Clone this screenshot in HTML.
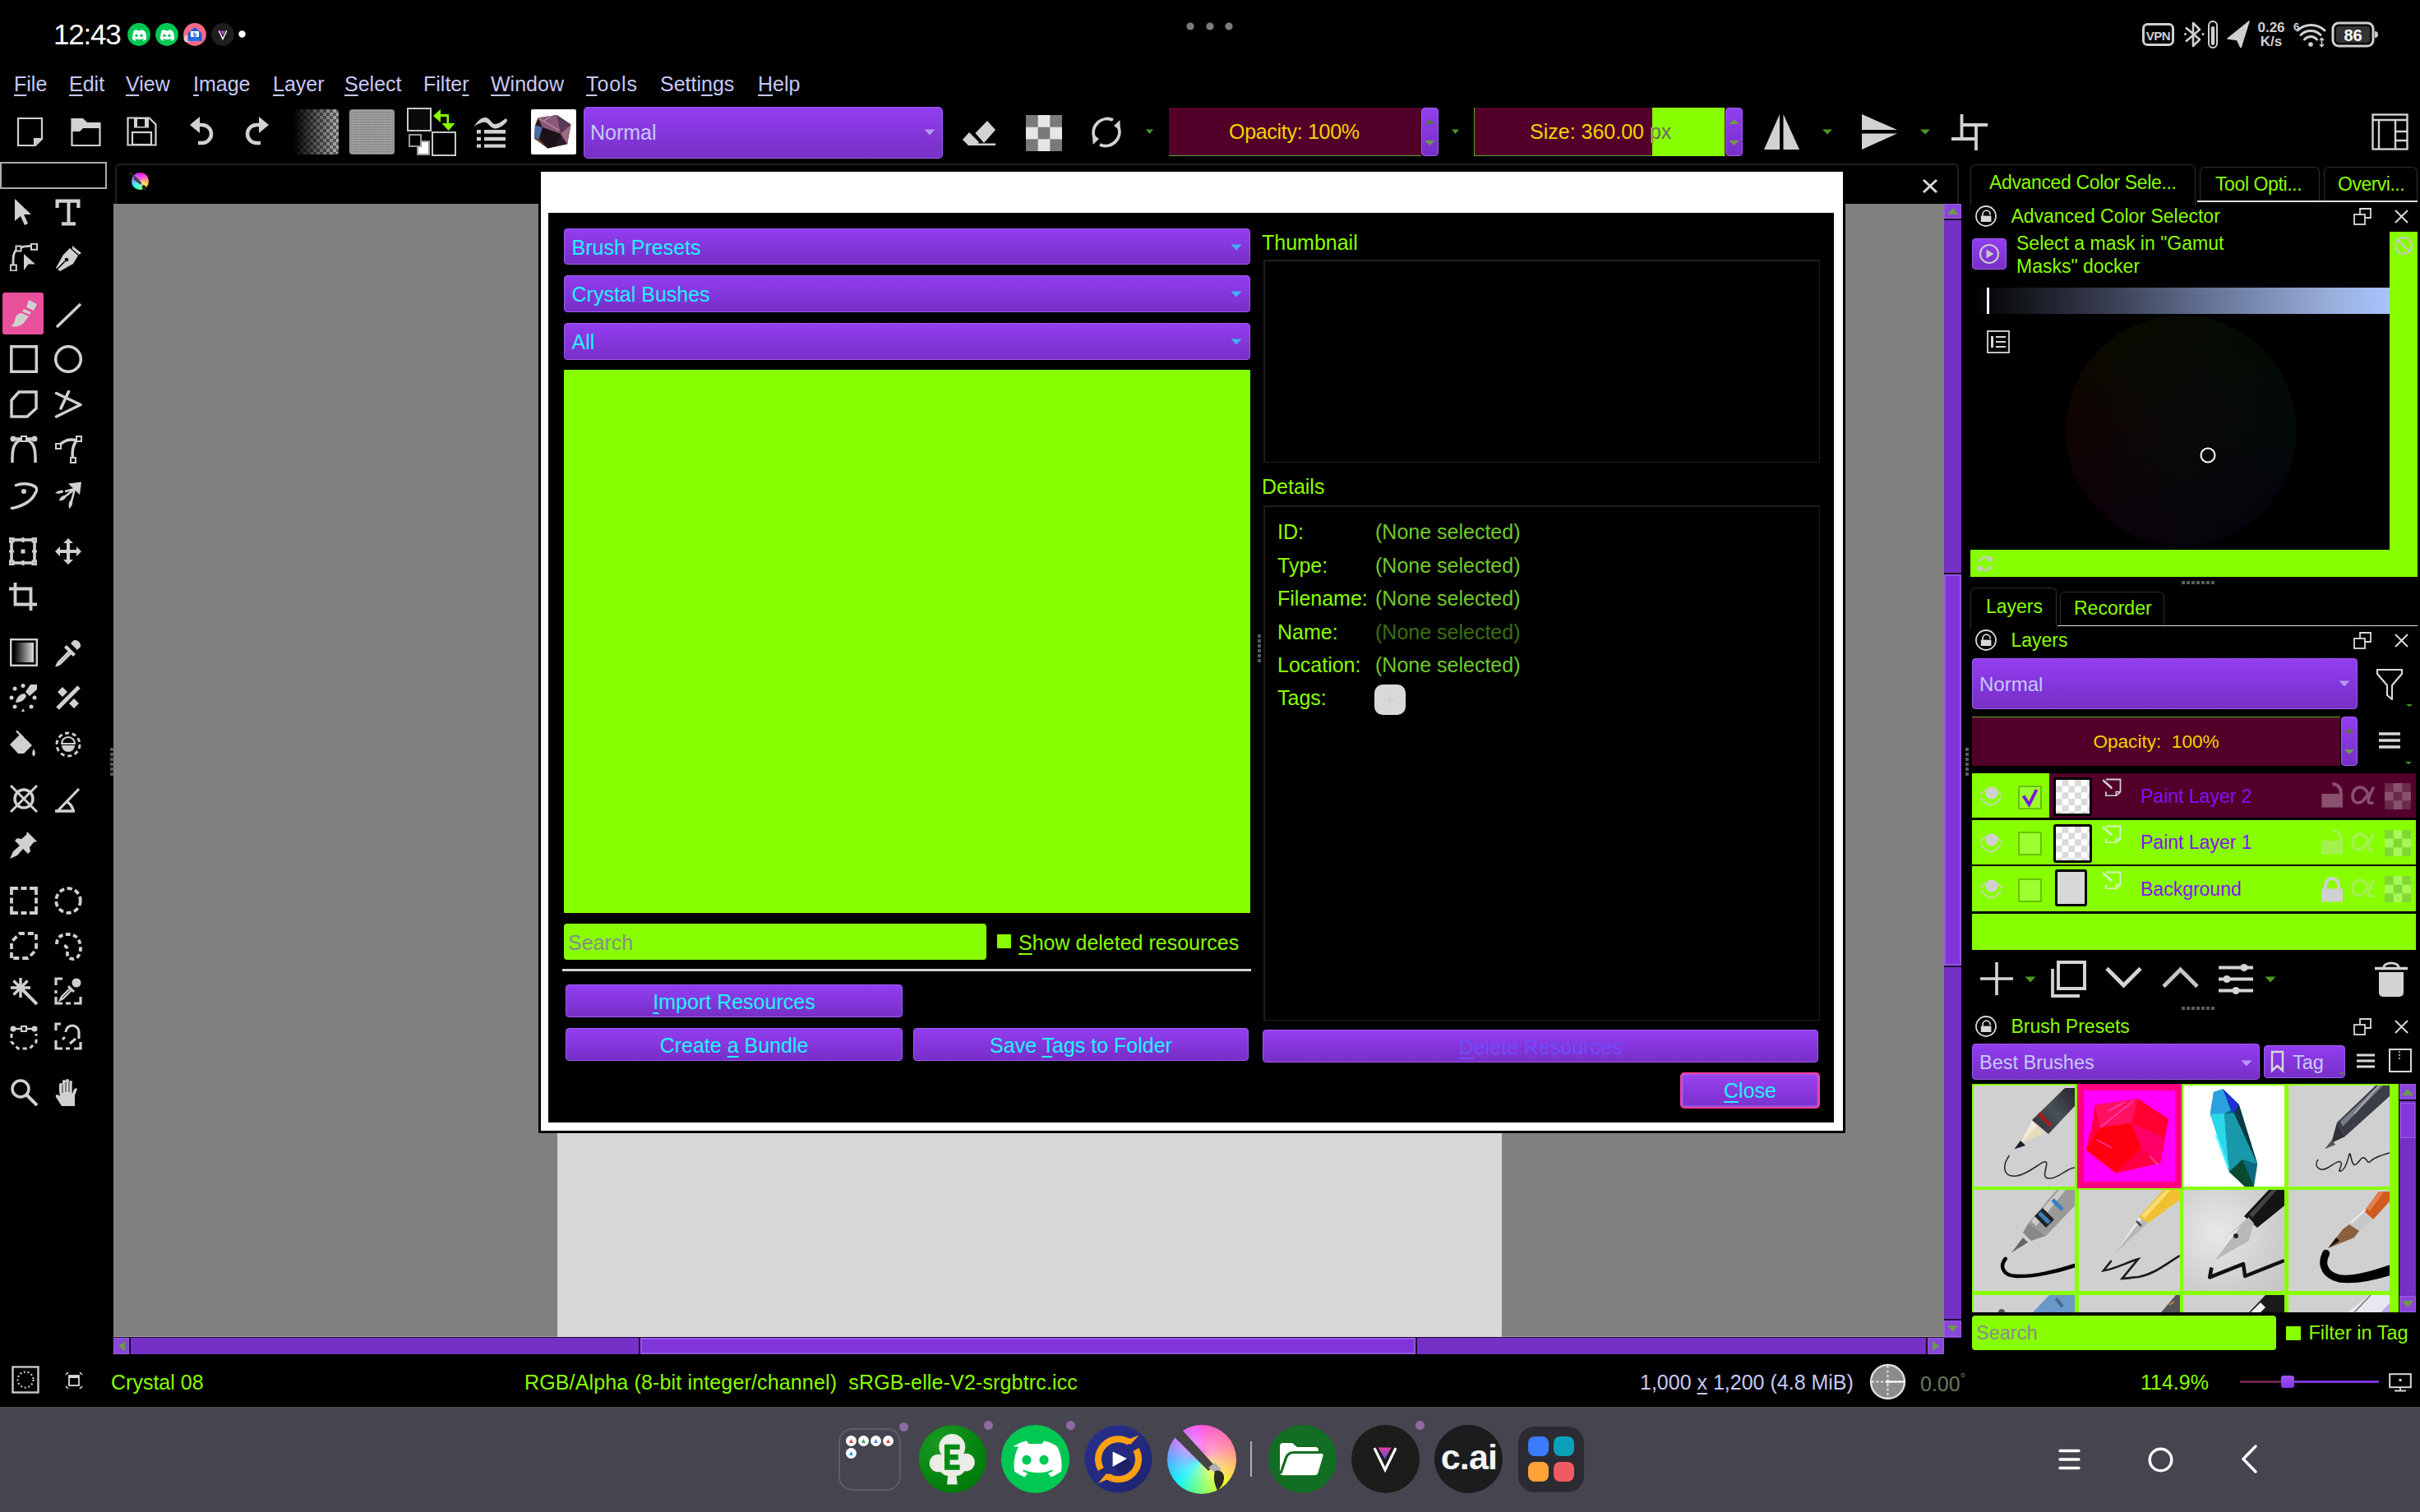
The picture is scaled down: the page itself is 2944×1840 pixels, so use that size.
<!DOCTYPE html><html><head><meta charset="utf-8"><style>
html,body{margin:0;padding:0;background:#000;width:2944px;height:1840px;overflow:hidden}
body>div,body>svg{position:absolute}
.t{position:absolute;white-space:nowrap;line-height:1;font-family:"Liberation Sans",sans-serif}
.u{text-decoration:underline;text-decoration-thickness:2px;text-underline-offset:4px}
.btn{position:absolute;box-sizing:border-box;border:1px solid #a466f2;border-radius:4px;background:linear-gradient(#9443f1,#8737de 50%,#7a30c9)}
</style></head><body>
<div class="t" style="left:65px;top:24.4px;font-size:35px;color:#ffffff;letter-spacing:-1.2px">12:43</div>
<svg style="left:155px;top:28px;width:28px;height:28px;" viewBox="0 0 28 28"><circle cx="14" cy="14" r="13.9" fill="#00c853"/><path d="M6.5 10.5c2.2-1.8 4.6-2.4 4.6-2.4l.6 1.1h4.6l.6-1.1s2.4.6 4.6 2.4c1.3 3 1.8 6.2 1.5 9.2-1.8 1.4-3.6 2-3.6 2l-1-1.5c.7-.3 1.3-.6 1.8-1l-.5-.4c-3.3 1.6-7 1.6-10.3 0l-.5.4c.5.4 1.1.7 1.8 1l-1 1.5s-1.8-.6-3.6-2c-.3-3 .2-6.2 1.5-9.2z" fill="#fff"/><circle cx="11" cy="15.2" r="1.7" fill="#00c853"/><circle cx="17" cy="15.2" r="1.7" fill="#00c853"/></svg>
<svg style="left:189px;top:28px;width:28px;height:28px;" viewBox="0 0 28 28"><circle cx="14" cy="14" r="13.9" fill="#00c853"/><path d="M6.5 10.5c2.2-1.8 4.6-2.4 4.6-2.4l.6 1.1h4.6l.6-1.1s2.4.6 4.6 2.4c1.3 3 1.8 6.2 1.5 9.2-1.8 1.4-3.6 2-3.6 2l-1-1.5c.7-.3 1.3-.6 1.8-1l-.5-.4c-3.3 1.6-7 1.6-10.3 0l-.5.4c.5.4 1.1.7 1.8 1l-1 1.5s-1.8-.6-3.6-2c-.3-3 .2-6.2 1.5-9.2z" fill="#fff"/><circle cx="11" cy="15.2" r="1.7" fill="#00c853"/><circle cx="17" cy="15.2" r="1.7" fill="#00c853"/></svg>
<svg style="left:223px;top:28px;width:28px;height:28px;" viewBox="0 0 28 28"><circle cx="14" cy="14" r="13.9" fill="#f46a84"/><circle cx="5" cy="19" r="4.5" fill="#f8c0c8"/><path d="M5.5 12.5L14 5l8.5 7.5v9.5h-17z" fill="#1e5fd6"/><rect x="9" y="10" width="10" height="7" fill="#fff"/><path d="M12.8 11v4M12.8 14.2a1.4 1.4 0 1 0 2.8 0a1.4 1.4 0 1 0-2.8 0" fill="none" stroke="#1e5fd6" stroke-width="1.1"/><path d="M5.5 22l8.5-6 8.5 6z" fill="#2a70e8"/></svg>
<svg style="left:257px;top:28px;width:28px;height:28px;" viewBox="0 0 28 28"><circle cx="14" cy="14" r="13.9" fill="#1e1e1e"/><path d="M9.2 9.2L14 19.5l4.8-10.3" fill="none" stroke="#fff" stroke-width="1.4"/><path d="M10.8 9.6h6.4L14 15z" fill="#b040d0"/></svg>
<svg style="left:290px;top:37px;width:9px;height:9px;" viewBox="0 0 9 9"><circle cx="4.5" cy="4.5" r="4.2" fill="#fff"/></svg>
<svg style="left:1443px;top:27px;width:10px;height:10px;" viewBox="0 0 10 10"><circle cx="5" cy="5" r="4.6" fill="#7c7c7c"/></svg>
<svg style="left:1467px;top:27px;width:10px;height:10px;" viewBox="0 0 10 10"><circle cx="5" cy="5" r="4.6" fill="#7c7c7c"/></svg>
<svg style="left:1490px;top:27px;width:10px;height:10px;" viewBox="0 0 10 10"><circle cx="5" cy="5" r="4.6" fill="#7c7c7c"/></svg>
<svg style="left:2605px;top:27px;width:42px;height:30px;" viewBox="0 0 42 30"><rect x="2.5" y="2.5" width="36" height="25" rx="5" fill="none" stroke="#d0d0d0" stroke-width="3"/><text x="20.5" y="21.5" font-size="15" text-anchor="middle" fill="#d0d0d0" font-family="Liberation Sans" font-weight="bold" letter-spacing="-0.5">VPN</text></svg>
<svg style="left:2656px;top:24px;width:44px;height:36px;" viewBox="0 0 44 36"><path d="M3 9.5L20 24l-8 8V4l8 8L3 26.5" fill="none" stroke="#d0d0d0" stroke-width="2.6" stroke-linejoin="round"/><circle cx="2.5" cy="17.5" r="1.5" fill="#d0d0d0"/><circle cx="24" cy="17.5" r="1.5" fill="#d0d0d0"/><rect x="31" y="2" width="10" height="32" rx="5" fill="none" stroke="#d0d0d0" stroke-width="2"/><rect x="33.8" y="8" width="4.4" height="23" rx="2.2" fill="#d0d0d0"/></svg>
<svg style="left:2708px;top:24px;width:30px;height:34px;" viewBox="0 0 30 34"><path d="M28 2L2 23l11.5 1.5L18 34z" fill="#d0d0d0" stroke="#d0d0d0" stroke-width="1.5" stroke-linejoin="round"/></svg>
<div class="t" style="left:2744px;top:26px;font-size:17px;line-height:16.5px;color:#d0d0d0;font-weight:bold;text-align:center;width:38px">0.26<br>K/s</div>
<svg style="left:2788px;top:24px;width:44px;height:36px;" viewBox="0 0 44 36"><text x="2" y="13" font-size="13" fill="#d0d0d0" font-family="Liberation Sans" font-weight="bold">6</text><path d="M7 13a24 24 0 0 1 33 0M11 18.5a17 17 0 0 1 24 0M15.5 24a10 10 0 0 1 15 0" fill="none" stroke="#d0d0d0" stroke-width="3" stroke-linecap="round"/><circle cx="23" cy="30" r="2.8" fill="#d0d0d0"/><path d="M34 25l2.5-2.5 2.5 2.5M34 30l2.5 2.5 2.5-2.5M36.5 23v9" fill="none" stroke="#d0d0d0" stroke-width="1.6"/></svg>
<svg style="left:2836px;top:26px;width:58px;height:32px;" viewBox="0 0 58 32"><rect x="2" y="2" width="49" height="28" rx="7" fill="none" stroke="#d0d0d0" stroke-width="3"/><rect x="6" y="6" width="41" height="20" rx="3" fill="#333"/><path d="M53 12a4 4 0 0 1 0 8z" fill="#d0d0d0"/><text x="26.5" y="24" font-size="20" text-anchor="middle" fill="#fff" font-family="Liberation Sans" font-weight="bold">86</text></svg>
<div class="t" style="left:17px;top:89.8px;font-size:25px;color:#c6c9f7;"><span class="u">F</span>ile</div>
<div class="t" style="left:84px;top:89.8px;font-size:25px;color:#c6c9f7;"><span class="u">E</span>dit</div>
<div class="t" style="left:153px;top:89.8px;font-size:25px;color:#c6c9f7;"><span class="u">V</span>iew</div>
<div class="t" style="left:235px;top:89.8px;font-size:25px;color:#c6c9f7;"><span class="u">I</span>mage</div>
<div class="t" style="left:332px;top:89.8px;font-size:25px;color:#c6c9f7;"><span class="u">L</span>ayer</div>
<div class="t" style="left:419px;top:89.8px;font-size:25px;color:#c6c9f7;"><span class="u">S</span>elect</div>
<div class="t" style="left:515px;top:89.8px;font-size:25px;color:#c6c9f7;">Filte<span class="u">r</span></div>
<div class="t" style="left:597px;top:89.8px;font-size:25px;color:#c6c9f7;"><span class="u">W</span>indow</div>
<div class="t" style="left:713px;top:89.8px;font-size:25px;color:#c6c9f7;letter-spacing:0.9px"><span class="u">T</span>ools</div>
<div class="t" style="left:803px;top:89.8px;font-size:25px;color:#c6c9f7;">Setti<span class="u">n</span>gs</div>
<div class="t" style="left:922px;top:89.8px;font-size:25px;color:#c6c9f7;"><span class="u">H</span>elp</div>
<svg style="left:20px;top:142px;width:34px;height:37px;" viewBox="0 0 34 37"><path d="M2 2h29v25l-8 8H2z" fill="none" stroke="#d2d2d2" stroke-width="2.2"/><path d="M21 35v-9h10z" fill="#d2d2d2"/></svg>
<svg style="left:86px;top:142px;width:37px;height:37px;" viewBox="0 0 37 37"><path d="M1.5 3h13l5 5h16v27H1.5z" fill="none" stroke="#d2d2d2" stroke-width="2.2"/><path d="M1.5 3h13l5 5h16v6H15l-4 4H1.5z" fill="#d2d2d2"/></svg>
<svg style="left:154px;top:142px;width:37px;height:37px;" viewBox="0 0 37 37"><path d="M1.5 1.5h26l8 8v25H1.5z" fill="none" stroke="#d2d2d2" stroke-width="2.2"/><rect x="9" y="1.5" width="18" height="12" fill="#d2d2d2"/><rect x="13" y="3" width="9" height="9" fill="#000"/><rect x="7" y="19" width="23" height="15" fill="none" stroke="#d2d2d2" stroke-width="2.2"/></svg>
<svg style="left:230px;top:140px;width:32px;height:40px;" viewBox="0 0 32 40"><path d="M12 12h4a11 11 0 0 1 0 22h-5" fill="none" stroke="#d2d2d2" stroke-width="4.5"/><path d="M1 12L13 2v20z" fill="#d2d2d2"/></svg>
<svg style="left:296px;top:140px;width:32px;height:40px;" viewBox="0 0 32 40"><path d="M20 12h-4a11 11 0 0 0 0 22h5" fill="none" stroke="#d2d2d2" stroke-width="4.5"/><path d="M31 12L19 2v20z" fill="#d2d2d2"/></svg>
<div style="left:357px;top:133px;width:55px;height:55px;border-radius:4px;background-image:linear-gradient(90deg,#000,rgba(0,0,0,0) 95%),linear-gradient(45deg,#5a5a5a 25%,transparent 25%,transparent 75%,#5a5a5a 75%),linear-gradient(45deg,#5a5a5a 25%,transparent 25%,transparent 75%,#5a5a5a 75%);background-color:#a8a8a8;background-size:100% 100%,8px 8px,8px 8px;background-position:0 0,0 0,4px 4px"></div>
<div style="left:425px;top:133px;width:55px;height:55px;border-radius:4px;background:#999;background-image:repeating-linear-gradient(0deg,rgba(0,0,0,.12) 0 1px,transparent 1px 3px),repeating-linear-gradient(90deg,rgba(255,255,255,.1) 0 1px,transparent 1px 3px)"></div>
<div style="left:495px;top:131px;width:30px;height:29px;box-sizing:border-box;border:2px solid #c8c8c8;background:#0a0a0c"></div>
<div style="left:525px;top:160px;width:30px;height:30px;box-sizing:border-box;border:2px solid #c8c8c8;background:#000"></div>
<div style="left:507px;top:171px;width:16px;height:18px;box-sizing:border-box;border:2px solid #9a9a9a;background:#fff"></div>
<div style="left:497px;top:163px;width:16px;height:16px;box-sizing:border-box;border:2px solid #9a9a9a;background:#000"></div>
<svg style="left:526px;top:131px;width:30px;height:30px;" viewBox="0 0 30 30"><path d="M1 10L10 2v16z" fill="#88ff00"/><rect x="9" y="8" width="10" height="3" fill="#88ff00"/><rect x="17.5" y="8" width="2.5" height="12" fill="#88ff00"/><path d="M11.5 19h16L19.5 28z" fill="#88ff00"/></svg>
<svg style="left:574px;top:138px;width:46px;height:44px;" viewBox="0 0 46 44"><path d="M2.5 16C8 8 12 4.5 17 5s7 8 11 8 8-3 12-6c2-1.5 4 1 2.5 3-3 4-9 8.5-14 8.5S20 12 17 11 8 12 2.5 16z" fill="#d0d0d0"/><rect x="6" y="20" width="5" height="4.6" fill="#d0d0d0"/><rect x="15" y="20" width="26" height="4.6" fill="#d0d0d0"/><rect x="6" y="28.8" width="5" height="4.4" fill="#d0d0d0"/><rect x="15" y="28.8" width="26" height="4.4" fill="#d0d0d0"/><rect x="6" y="37.5" width="5" height="4.2" fill="#d0d0d0"/><rect x="15" y="37.5" width="26" height="4.2" fill="#d0d0d0"/></svg>
<div style="left:646px;top:133px;width:55px;height:55px;background:#fff;border-radius:2px"></div>
<svg style="left:646px;top:133px;width:55px;height:55px;" viewBox="0 0 55 55"><path d="M8.5 10.6L31.3 7 48.5 18.4 44 42.5 20.4 47.5 4 35.6 5 19.3z" fill="#2a1a24"/><path d="M8.5 10.6L31.3 7 48.5 18.4 36 30 14 22z" fill="#8a5878"/><path d="M31.3 7L48.5 18.4 36 30z" fill="#5a3a5a"/><path d="M36 30L48.5 18.4 44 42.5z" fill="#9a6a80"/><path d="M5 19.3L14 22 10 36 4 35.6z" fill="#4a6aa8"/><path d="M14 22L36 30 30 45 20.4 47.5 10 36z" fill="#1a1218"/><path d="M10 36L20.4 47.5 4 35.6z" fill="#7a4028"/><path d="M8.5 10.6l26 15" stroke="#f0c0c0" stroke-width="1" opacity=".7"/><path d="M16 14l14-10" stroke="#fff" stroke-width="1" opacity=".6"/></svg>
<div style="left:710px;top:129.5px;width:437px;height:63.5px;box-sizing:border-box;border:1.5px solid #a15cf2;border-radius:5px;background:linear-gradient(#923ef0,#8536dc 50%,#772fc6)"></div>
<div class="t" style="left:718px;top:148.8px;font-size:25px;color:#c6c9f7;">Normal</div>
<svg style="left:1124px;top:157px;width:14px;height:8px;" viewBox="0 0 14 8"><path d="M0.5 0.5h13L7 7.5z" fill="#b59af0"/></svg>
<svg style="left:1170px;top:140px;width:44px;height:40px;" viewBox="0 0 44 40"><path d="M20.5 22L35 7l10 11L31 34z" fill="#d2d2d2" transform="translate(-4 0)"/><path d="M1 30l8-9 12 12-4 4H8z" fill="#d2d2d2"/><rect x="17" y="34.5" width="24" height="2.5" fill="#d2d2d2"/></svg>
<svg style="left:1248px;top:140px;width:44px;height:44px;" viewBox="0 0 44 44"><rect width="44" height="44" fill="#e6e6e6"/><rect x="0" y="0" width="14.7" height="14.7" fill="#7a7a7a"/><rect x="29.3" y="0" width="14.7" height="14.7" fill="#7a7a7a"/><rect x="14.7" y="14.7" width="14.6" height="14.6" fill="#7a7a7a"/><rect x="0" y="29.3" width="14.7" height="14.7" fill="#7a7a7a"/><rect x="29.3" y="29.3" width="14.7" height="14.7" fill="#7a7a7a"/></svg>
<svg style="left:1325px;top:140px;width:42px;height:42px;" viewBox="0 0 42 42"><path d="M29 6A17 17 0 0 0 6 27M13 36A17 17 0 0 0 36 15" fill="none" stroke="#d2d2d2" stroke-width="3.8"/><path d="M3 23l9 5-6 8z" fill="#d2d2d2" transform="rotate(10 6 28)"/><path d="M39 19l-9-5 6-8z" fill="#d2d2d2" transform="rotate(10 36 14)"/></svg>
<svg style="left:1394px;top:157px;width:10px;height:7px;" viewBox="0 0 10 7"><path d="M0 0.5h9L4.5 6z" fill="#4a9a20"/></svg>
<div style="left:1422px;top:131px;width:307px;height:59px;background:#52002a;border-bottom:1.5px solid #5aaa20;box-sizing:border-box"></div>
<div class="t" style="left:1495px;top:147.8px;font-size:25px;color:#f2d400;letter-spacing:-0.3px">Opacity: 100%</div>
<div style="left:1729px;top:131px;width:21px;height:59px;box-sizing:border-box;border:1.5px solid #a15cf2;border-radius:4px;background:linear-gradient(#923ef0,#8536dc 50%,#772fc6)"></div>
<svg style="left:1730px;top:141px;width:19px;height:40px;" viewBox="0 0 19 40"><path d="M3 10l6.5-6 6.5 6z" fill="#5e6e4e"/><path d="M3 30l6.5 6 6.5-6z" fill="#6f9a48"/></svg>
<svg style="left:1766px;top:157px;width:10px;height:7px;" viewBox="0 0 10 7"><path d="M0 0.5h9L4.5 6z" fill="#4a9a20"/></svg>
<div style="left:1793px;top:131px;width:306px;height:59px;background:#52002a;border-bottom:1.5px solid #5aaa20;border-left:1.5px solid #5aaa20;box-sizing:border-box"></div>
<div style="left:2010px;top:131px;width:88px;height:59px;background:#88ff00"></div>
<div style="left:1793px;top:131px;width:217px;height:59px;overflow:hidden"><div class="t" style="left:68px;top:16.8px;font-size:25px;color:#f2d400">Size: 360.00 px</div></div>
<div style="left:2010px;top:131px;width:88px;height:59px;overflow:hidden"><div class="t" style="left:-149px;top:16.8px;font-size:25px;color:#6a6a6a">Size: 360.00 px</div></div>
<div style="left:2099px;top:131px;width:21px;height:59px;box-sizing:border-box;border:1.5px solid #a15cf2;border-radius:4px;background:linear-gradient(#923ef0,#8536dc 50%,#772fc6)"></div>
<svg style="left:2100px;top:141px;width:19px;height:40px;" viewBox="0 0 19 40"><path d="M3 10l6.5-6 6.5 6z" fill="#6f9a48"/><path d="M3 30l6.5 6 6.5-6z" fill="#6f9a48"/></svg>
<svg style="left:2146px;top:139px;width:43px;height:43px;" viewBox="0 0 43 43"><path d="M19 0v43H0z" fill="#d2d2d2"/><path d="M23.5 0v43H43z" fill="#d2d2d2"/></svg>
<svg style="left:2217px;top:157px;width:13px;height:7px;" viewBox="0 0 13 7"><path d="M0 0.5h12L6 6.5z" fill="#4a9a20"/></svg>
<svg style="left:2265px;top:139px;width:43px;height:43px;" viewBox="0 0 43 43"><path d="M0 0l43 19H0z" fill="#d2d2d2"/><path d="M0 23.5h43L0 43z" fill="#d2d2d2"/></svg>
<svg style="left:2336px;top:157px;width:13px;height:7px;" viewBox="0 0 13 7"><path d="M0 0.5h12L6 6.5z" fill="#4a9a20"/></svg>
<svg style="left:2374px;top:139px;width:44px;height:44px;" viewBox="0 0 44 44"><path d="M12.5 0V32M10.6 13H44M30 11.1V44M0 30H31.9" stroke="#d2d2d2" stroke-width="3.8" fill="none"/></svg>
<svg style="left:2885px;top:138px;width:45px;height:45px;" viewBox="0 0 45 45"><rect x="1.5" y="1.5" width="42" height="42" fill="none" stroke="#d2d2d2" stroke-width="2.4"/><path d="M1.5 8h42M9 8v35M29 8v35M29 22h14M29 33h14" stroke="#d2d2d2" stroke-width="2.4" fill="none"/></svg>
<div style="left:0px;top:197px;width:130px;height:33px;box-sizing:border-box;border:2px solid #acacac"></div>
<svg style="left:11.5px;top:241px;width:34px;height:34px;" viewBox="0 0 34 34"><path d="M6 1l20 19h-9l5 11-4 2-5-11-7 6z" fill="#d0d0d0"/></svg>
<svg style="left:66px;top:241px;width:34px;height:34px;" viewBox="0 0 34 34"><path d="M1.5 1.5h30v10.5h-4.2V5.8H19.5v23.5h6.5v4.2H9v-4.2h6.5V5.8H5.7v6.2H1.5z" fill="#d0d0d0"/></svg>
<svg style="left:11.5px;top:296px;width:34px;height:34px;" viewBox="0 0 34 34"><path d="M4 29V20Q4 9 11 6Q18 3 27 3.5" fill="none" stroke="#d0d0d0" stroke-width="2.8"/><rect x="0.8" y="26.5" width="7" height="7" fill="#000" stroke="#d0d0d0" stroke-width="2"/><rect x="7.5" y="3.5" width="6" height="6" fill="#000" stroke="#d0d0d0" stroke-width="2"/><rect x="26" y="0.8" width="7" height="7" fill="#000" stroke="#d0d0d0" stroke-width="2"/><path d="M17 13l14 12.5h-8.5L17 33z" fill="#d0d0d0"/></svg>
<svg style="left:66px;top:297px;width:34px;height:34px;" viewBox="0 0 34 34"><path d="M22 2l11 9-3 2-8-7z" fill="#d0d0d0"/><path d="M19 5l10 9-6 10L7 33l-5-4L11 13z" fill="#d0d0d0"/><path d="M3 31l10-10" stroke="#000" stroke-width="1.6"/><circle cx="15" cy="19" r="2.3" fill="#000"/></svg>
<div style="left:2.5px;top:356px;width:50px;height:51px;background:#e8509c;border-radius:3px"></div>
<svg style="left:11.5px;top:364px;width:34px;height:34px;" viewBox="0 0 34 34"><path d="M23 1l10 5-4 8-9-4z" fill="#d0d0d0"/><path d="M17 12l9 4-2 3-9-4zM14 17l9 4-7 9c-4 3-9 4-15 3 5-3 5-8 6-11 2-4 5-5 7-5z" fill="#d0d0d0"/></svg>
<svg style="left:66px;top:367px;width:34px;height:34px;" viewBox="0 0 34 34"><path d="M3 31L32 3" fill="none" stroke="#d0d0d0" stroke-width="3.5" stroke-width="3"/></svg>
<svg style="left:11.5px;top:420px;width:34px;height:34px;" viewBox="0 0 34 34"><rect x="1.8" y="1.8" width="30.5" height="30.5" fill="none" stroke="#d0d0d0" stroke-width="3.5"/></svg>
<svg style="left:66px;top:420px;width:34px;height:34px;" viewBox="0 0 34 34"><circle cx="17" cy="17" r="15.3" fill="none" stroke="#d0d0d0" stroke-width="3.5"/></svg>
<svg style="left:11.5px;top:475px;width:34px;height:34px;" viewBox="0 0 34 34"><path d="M11 2h21v20L21 32H2V12z" fill="none" stroke="#d0d0d0" stroke-width="3.5"/></svg>
<svg style="left:65.5px;top:475px;width:34px;height:34px;" viewBox="0 0 34 34"><path d="M2.5 3.5L32 17.5 2.5 32" fill="none" stroke="#d0d0d0" stroke-width="3.5" stroke-linejoin="round" stroke-linecap="round"/><path d="M17.5 1.5L8 22" fill="none" stroke="#d0d0d0" stroke-width="3.5" stroke-linecap="round"/></svg>
<svg style="left:11.5px;top:529px;width:34px;height:34px;" viewBox="0 0 34 34"><path d="M3 34V28Q3 6 17 6t14 22v6" fill="none" stroke="#d0d0d0" stroke-width="3.5" stroke-width="3"/><path d="M1 5h32" fill="none" stroke="#d0d0d0" stroke-width="3.5"/><circle cx="4" cy="5" r="3.5" fill="#d0d0d0"/><circle cx="30" cy="5" r="3.5" fill="#d0d0d0"/><rect x="14" y="2" width="6" height="6" fill="#000" stroke="#d0d0d0" stroke-width="2"/></svg>
<svg style="left:66px;top:530px;width:34px;height:34px;" viewBox="0 0 34 34"><path d="M5 13Q15 2 27 6M27 6Q20 16 23 30" fill="none" stroke="#d0d0d0" stroke-width="3.5" stroke-width="3"/><rect x="2" y="10" width="6" height="6" fill="#000" stroke="#d0d0d0" stroke-width="2"/><rect x="27" y="1" width="6" height="6" fill="#000" stroke="#d0d0d0" stroke-width="2"/><rect x="20" y="27" width="6" height="6" fill="#000" stroke="#d0d0d0" stroke-width="2"/></svg>
<svg style="left:11.5px;top:586px;width:34px;height:34px;" viewBox="0 0 34 34"><path d="M6 5Q16 1 26 4t5 10Q25 28 1 33" fill="none" stroke="#d0d0d0" stroke-width="3.5" stroke-width="3"/><circle cx="17" cy="12" r="3" fill="#d0d0d0"/></svg>
<svg style="left:65.5px;top:586px;width:34px;height:34px;" viewBox="0 0 34 34"><path d="M33 0.5L17 2.5 31 16z" fill="#d0d0d0"/><path d="M25 9L13 12M25 9L12 19M25 9L21 24" stroke="#d0d0d0" stroke-width="2.6"/><path d="M11 11c-3-1-7 0-10 3 3 1 7 1 10-1zM13 17c-3 0-6 2-7 6 3 1 7-1 8-4zM21 22c-3 1-4 5-3 11 3-2 5-6 4-10z" fill="#d0d0d0"/></svg>
<svg style="left:11.0px;top:654px;width:34px;height:34px;" viewBox="0 0 34 34"><rect x="3" y="3" width="28" height="28" fill="none" stroke="#d0d0d0" stroke-width="3.6"/><path d="M17 0v6M17 28v6M0 17h6M28 17h6M1 1h4v4H1zM29 1h4v4h-4zM1 29h4v4H1zM29 29h4v4h-4z" stroke="#d0d0d0" stroke-width="3"/><rect x="14.5" y="14.5" width="5" height="5" fill="#d0d0d0"/></svg>
<svg style="left:66px;top:654px;width:34px;height:34px;" viewBox="0 0 34 34"><path d="M17 1l-6 6h4v8H7v-4l-6 6 6 6v-4h8v8h-4l6 6 6-6h-4v-8h8v4l6-6-6-6v4h-8V7h4z" fill="#d0d0d0"/></svg>
<svg style="left:11.0px;top:709px;width:34px;height:34px;" viewBox="0 0 34 34"><path d="M7.5 0v26.5H34M0 7.5h26.5V34" fill="none" stroke="#d0d0d0" stroke-width="3.8"/></svg>
<svg style="left:11.5px;top:777px;width:34px;height:34px;" viewBox="0 0 34 34"><defs><linearGradient id="gg"><stop offset="0" stop-color="#000"/><stop offset="1" stop-color="#ddd"/></linearGradient></defs><rect x="1.2" y="1.2" width="31.6" height="31.6" fill="none" stroke="#d0d0d0" stroke-width="2.4"/><rect x="5" y="5" width="24" height="24" fill="url(#gg)"/></svg>
<svg style="left:65.5px;top:777px;width:34px;height:34px;" viewBox="0 0 34 34"><path d="M24 2a7 7 0 0 1 8 8l-4 4-8-8z" fill="#d0d0d0"/><path d="M15 8l11 11-3 3-11-11z" fill="#d0d0d0"/><path d="M19 15L5 29l-2 4 4-2 14-14" fill="none" stroke="#d0d0d0" stroke-width="2.6"/></svg>
<svg style="left:11.0px;top:832px;width:34px;height:34px;" viewBox="0 0 34 34"><path d="M26 1h8v6l-9 8-5-5z" fill="#d0d0d0"/><path d="M19 12c-6 0-10 5-11 11 6 0 11-3 13-8z" fill="#d0d0d0"/><circle cx="3" cy="17" r="2.5" fill="#d0d0d0"/><circle cx="31" cy="17" r="2.5" fill="#d0d0d0"/><path d="M17 30l2 4h-4z" fill="#d0d0d0"/><circle cx="7" cy="6" r="2.5" fill="#d0d0d0"/><circle cx="7" cy="28" r="2.5" fill="#d0d0d0"/><circle cx="27" cy="28" r="2.5" fill="#d0d0d0"/><circle cx="17" cy="2.5" r="2.5" fill="#d0d0d0"/></svg>
<svg style="left:66px;top:832px;width:34px;height:34px;" viewBox="0 0 34 34"><path d="M4 10l6-6 6 6-6 6zM18 24l6-6 6 6-6 6z" fill="#d0d0d0"/><path d="M4 30L30 4" stroke="#d0d0d0" stroke-width="5"/></svg>
<svg style="left:11.0px;top:889px;width:34px;height:34px;" viewBox="0 0 34 34"><path d="M1 17L14 4l14 14-10 10H11z" fill="#d0d0d0"/><path d="M8 10h18" stroke="#000" stroke-width="0"/><path d="M9 0.5l8 8" stroke="#d0d0d0" stroke-width="2.4"/><path d="M30 22q3.5 6 0 10q-3.5-4 0-10z" fill="#d0d0d0"/></svg>
<svg style="left:66px;top:889px;width:34px;height:34px;" viewBox="0 0 34 34"><circle cx="17" cy="17" r="14" fill="none" stroke="#d0d0d0" stroke-width="3" stroke-dasharray="5 3.8"/><path d="M9 16a8 8 0 0 1 16 0z" fill="none" stroke="#d0d0d0" stroke-width="2.2"/><path d="M9 18h16a8 8 0 0 1-16 0z" fill="#d0d0d0"/></svg>
<svg style="left:11.5px;top:955px;width:34px;height:34px;" viewBox="0 0 34 34"><circle cx="17" cy="17" r="11" fill="none" stroke="#d0d0d0" stroke-width="3.5" stroke-width="2"/><path d="M1 1l32 32M33 1L1 33" stroke="#d0d0d0" stroke-width="3"/></svg>
<svg style="left:66px;top:955px;width:34px;height:34px;" viewBox="0 0 34 34"><path d="M3 33L30 5" stroke="#d0d0d0" stroke-width="3.2"/><path d="M1 32h24" stroke="#d0d0d0" stroke-width="3.5"/><path d="M14 20q8 4 9 12" fill="none" stroke="#d0d0d0" stroke-width="3.5" stroke-width="2.4"/></svg>
<svg style="left:11.5px;top:1011px;width:34px;height:34px;" viewBox="0 0 34 34"><path d="M21 1l12 12-4 1-5 6 1 5-3 3-6-6-7 8-9 4 4-9 8-7-6-6 3-3 5 1 6-5z" fill="#d0d0d0"/></svg>
<svg style="left:11.5px;top:1079px;width:34px;height:34px;" viewBox="0 0 34 34"><path d="M2 10V2h8M13.5 2h7M24 2h8v8M32 13.5v7M32 24v8h-8M20.5 32h-7M10 32H2v-8M2 20.5v-7" fill="none" stroke="#d0d0d0" stroke-width="3.8"/></svg>
<svg style="left:66px;top:1079px;width:34px;height:34px;" viewBox="0 0 34 34"><circle cx="17" cy="17" r="14.8" fill="none" stroke="#d0d0d0" stroke-width="3.8" stroke-dasharray="6.2 3.5"/></svg>
<svg style="left:11.5px;top:1134px;width:34px;height:34px;" viewBox="0 0 34 34"><path d="M2 32V12L12 2H32V22L22 32z" fill="none" stroke="#d0d0d0" stroke-width="3.8" stroke-dasharray="7 4"/></svg>
<svg style="left:66px;top:1135px;width:34px;height:34px;" viewBox="0 0 34 34"><path d="M3 14Q3 2 17 2T32 18Q32 31 23 32Q15 32 16 23Q17 16 9 14.5" fill="none" stroke="#d0d0d0" stroke-width="3.8" stroke-dasharray="5.5 3.5"/></svg>
<svg style="left:11.5px;top:1189px;width:34px;height:34px;" viewBox="0 0 34 34"><path d="M13 1v24M1 13h24M4.5 4.5l17 17M21.5 4.5l-17 17" stroke="#d0d0d0" stroke-width="3.4"/><path d="M15 15l18 18" stroke="#d0d0d0" stroke-width="4"/></svg>
<svg style="left:66px;top:1189px;width:34px;height:34px;" viewBox="0 0 34 34"><path d="M2 10V2h8M2 20v-4M2 24v8h8M14 32h6M24 32h8v-8" fill="none" stroke="#d0d0d0" stroke-width="3.2"/><circle cx="27" cy="7" r="5.5" fill="#d0d0d0"/><path d="M18 10l7 7-2 2-7-7z" fill="#d0d0d0"/><path d="M19 14L9 24l-2 4 4-2 10-10" fill="none" stroke="#d0d0d0" stroke-width="2.2"/></svg>
<svg style="left:11.5px;top:1244px;width:34px;height:34px;" viewBox="0 0 34 34"><path d="M2 8Q17 8 32 8" stroke="#d0d0d0" stroke-width="2.4"/><circle cx="4" cy="8" r="3.5" fill="#d0d0d0"/><circle cx="30" cy="8" r="3.5" fill="#d0d0d0"/><rect x="14" y="5" width="6" height="6" fill="#000" stroke="#d0d0d0" stroke-width="2"/><path d="M2 14v10l8 8h14l8-8V14" fill="none" stroke="#d0d0d0" stroke-width="3" stroke-dasharray="5 4"/></svg>
<svg style="left:66px;top:1244px;width:34px;height:34px;" viewBox="0 0 34 34"><path d="M2 10V2h6M2 22v10h8M14 32h5M24 32h8v-8" fill="none" stroke="#d0d0d0" stroke-width="3.2"/><path d="M14 12a8 8 0 0 1 16 0v8" fill="none" stroke="#d0d0d0" stroke-width="3.2"/><path d="M19 26l7-6" stroke="#d0d0d0" stroke-width="3"/><path d="M13 18l-3 3" stroke="#d0d0d0" stroke-width="3"/></svg>
<svg style="left:11.5px;top:1312px;width:34px;height:34px;" viewBox="0 0 34 34"><circle cx="13" cy="13" r="10" fill="none" stroke="#d0d0d0" stroke-width="3.5" stroke-width="3.2"/><path d="M20 20l13 13" stroke="#d0d0d0" stroke-width="4"/></svg>
<svg style="left:66px;top:1312px;width:34px;height:34px;" viewBox="0 0 34 34"><path d="M6 16V8q0-2 2-2t2 2v8V4q0-2 2-2t2 2v12V3q0-2 2-2t2 2v13V5q0-2 2-2t2 2v13l2-4q2-3 4-1l-3 8v13H9L2 23q-1-3 2-3l3 2z" fill="#d0d0d0"/><path d="M10 8v10M14 5v12M18 4v13M22 6v12" stroke="#000" stroke-width="0.8"/></svg>
<div style="left:140px;top:199.3px;width:2243px;height:49px;box-sizing:border-box;border:2px solid #1e1e1e;border-bottom:none;border-radius:6px 6px 0 0"></div>
<div style="left:160px;top:210px;width:20.5px;height:20.5px;border-radius:50%;background:radial-gradient(circle at 45% 55%,rgba(255,255,255,.45),rgba(255,255,255,0) 60%),conic-gradient(from 0deg,#ff10f0,#ff60b0 60deg,#ffc040 105deg,#f0ff20 140deg,#40ffa0 190deg,#00ffff 225deg,#60a0ff 270deg,#b060ff 310deg,#ff10f0 360deg)"></div>
<svg style="left:156px;top:208px;width:28px;height:28px;" viewBox="0 0 28 28"><path d="M2.5 2.5l10 8.5" stroke="#3c3c3c" stroke-width="1.6" stroke-linecap="round"/><path d="M8 7l9 8-2 2-9-7z" fill="#444"/><path d="M15.5 15.5l2.5 2.5" stroke="#bbb" stroke-width="2.6"/><ellipse cx="19.5" cy="20.5" rx="2.4" ry="3.4" fill="#222" transform="rotate(-30 19.5 20.5)"/></svg>
<svg style="left:2337px;top:216px;width:22px;height:21px;" viewBox="0 0 22 21"><path d="M3 3l16 15M19 3L3 18" stroke="#d8d8d8" stroke-width="3"/></svg>
<div style="left:138px;top:248px;width:2227px;height:1380px;background:#808080"></div>
<div style="left:678px;top:248px;width:1149px;height:1380px;background:#d8d8d8"></div>
<div style="left:134px;top:910px;width:4px;height:4px;background:#555"></div>
<div style="left:134px;top:916px;width:4px;height:4px;background:#555"></div>
<div style="left:134px;top:922px;width:4px;height:4px;background:#555"></div>
<div style="left:134px;top:928px;width:4px;height:4px;background:#555"></div>
<div style="left:134px;top:934px;width:4px;height:4px;background:#555"></div>
<div style="left:134px;top:940px;width:4px;height:4px;background:#555"></div>
<div style="left:2365px;top:248px;width:21px;height:1380px;background:#7530c5"></div>
<div style="left:2365px;top:248px;width:21px;height:18px;background:#8a46d8;box-sizing:border-box;border:1px solid #9a5ae6"></div>
<svg style="left:2367px;top:250px;width:17px;height:14px;" viewBox="0 0 17 14"><path d="M2 11L8.5 3 15 11z" fill="#6f9a48"/></svg>
<div style="left:2365px;top:266px;width:21px;height:2px;background:#1a0a2a"></div>
<div style="left:2365px;top:697px;width:21px;height:2px;background:#1e0e2e"></div>
<div style="left:2365px;top:699px;width:21px;height:476px;background:#8035d8;box-sizing:border-box;border:2px solid #9655e6"></div>
<div style="left:2365px;top:1175px;width:21px;height:2px;background:#1e0e2e"></div>
<div style="left:2365px;top:1605px;width:21px;height:2px;background:#1e0e2e"></div>
<div style="left:2365px;top:1607px;width:21px;height:20px;background:#8a46d8;box-sizing:border-box;border:1px solid #9a5ae6"></div>
<svg style="left:2367px;top:1609px;width:17px;height:16px;" viewBox="0 0 17 16"><path d="M2 4L8.5 12 15 4z" fill="#6f9a48"/></svg>
<div style="left:138px;top:1626px;width:2227px;height:1.2px;background:rgba(255,255,255,.22)"></div>
<div style="left:138px;top:1627px;width:2227px;height:1.2px;background:#1e0a30"></div>
<div style="left:138px;top:1628px;width:2227px;height:20px;background:#7530c5"></div>
<div style="left:138px;top:1628px;width:19px;height:20px;background:#8a46d8;box-sizing:border-box;border:1px solid #9a5ae6"></div>
<svg style="left:140px;top:1630px;width:15px;height:16px;" viewBox="0 0 15 16"><path d="M12 2L4 8 12 14z" fill="#6f9a48"/></svg>
<div style="left:157px;top:1628px;width:2px;height:20px;background:#1a0a2a"></div>
<div style="left:777px;top:1628px;width:2px;height:20px;background:#1e0e2e"></div>
<div style="left:779px;top:1628px;width:943px;height:20px;background:#8035d8;box-sizing:border-box;border:2px solid #9655e6"></div>
<div style="left:1722px;top:1628px;width:2px;height:20px;background:#1e0e2e"></div>
<div style="left:2345px;top:1628px;width:20px;height:20px;background:#8a46d8;box-sizing:border-box;border:1px solid #9a5ae6"></div>
<svg style="left:2347px;top:1630px;width:16px;height:16px;" viewBox="0 0 16 16"><path d="M4 2L12 8 4 14z" fill="#6f9a48"/></svg>
<div style="left:2343px;top:1628px;width:2px;height:20px;background:#1a0a2a"></div>
<div style="left:655px;top:206px;width:1590px;height:1173px;background:#000"></div>
<div style="left:658px;top:209px;width:1584px;height:1167px;background:#fff"></div>
<div style="left:667px;top:259px;width:1564px;height:1107px;background:#000"></div>
<div style="left:686px;top:278px;width:835px;height:44px;box-sizing:border-box;border:1.5px solid #a15cf2;border-radius:4px;background:linear-gradient(#923ef0,#8536dc 50%,#772fc6)"></div>
<div class="t" style="left:695.5px;top:288.6px;font-size:25px;color:#22f2ff;">Brush Presets</div>
<svg style="left:1497px;top:297px;width:14px;height:8px;" viewBox="0 0 14 8"><path d="M0.5 0.5h13L7 7.5z" fill="#3fb2f2"/></svg>
<div style="left:686px;top:335px;width:835px;height:45px;box-sizing:border-box;border:1.5px solid #a15cf2;border-radius:4px;background:linear-gradient(#923ef0,#8536dc 50%,#772fc6)"></div>
<div class="t" style="left:695.5px;top:345.6px;font-size:25px;color:#22f2ff;">Crystal Bushes</div>
<svg style="left:1497px;top:354px;width:14px;height:8px;" viewBox="0 0 14 8"><path d="M0.5 0.5h13L7 7.5z" fill="#3fb2f2"/></svg>
<div style="left:686px;top:393px;width:835px;height:45px;box-sizing:border-box;border:1.5px solid #a15cf2;border-radius:4px;background:linear-gradient(#923ef0,#8536dc 50%,#772fc6)"></div>
<div class="t" style="left:695.5px;top:403.6px;font-size:25px;color:#22f2ff;">All</div>
<svg style="left:1497px;top:411.5px;width:14px;height:8px;" viewBox="0 0 14 8"><path d="M0.5 0.5h13L7 7.5z" fill="#3fb2f2"/></svg>
<div style="left:686px;top:450px;width:835px;height:661px;background:#88ff00"></div>
<div style="left:686px;top:1124px;width:514px;height:44px;background:#88ff00;border-radius:4px"></div>
<div class="t" style="left:691px;top:1134.8px;font-size:25px;color:#8a8a8a;">Search</div>
<div style="left:1213px;top:1137px;width:17px;height:17px;background:#88ff00"></div>
<div class="t" style="left:1239px;top:1134.8px;font-size:25px;color:#88ff00;"><span class="u">S</span>how deleted resources</div>
<div style="left:684px;top:1179px;width:838px;height:3px;background:#d4d4d4"></div>
<div style="left:688px;top:1198px;width:410px;height:40px;box-sizing:border-box;border:1.5px solid #a15cf2;border-radius:4px;background:linear-gradient(#923ef0,#8536dc 50%,#772fc6)"></div>
<div class="t" style="left:-107px;width:2000px;text-align:center;top:1206.8px;font-size:25px;color:#22f2ff;"><span class="u">I</span>mport Resources</div>
<div style="left:688px;top:1251px;width:410px;height:40px;box-sizing:border-box;border:1.5px solid #a15cf2;border-radius:4px;background:linear-gradient(#923ef0,#8536dc 50%,#772fc6)"></div>
<div class="t" style="left:-107px;width:2000px;text-align:center;top:1259.8px;font-size:25px;color:#22f2ff;">Create <span class="u">a</span> Bundle</div>
<div style="left:1111px;top:1251px;width:408px;height:40px;box-sizing:border-box;border:1.5px solid #a15cf2;border-radius:4px;background:linear-gradient(#923ef0,#8536dc 50%,#772fc6)"></div>
<div class="t" style="left:315px;width:2000px;text-align:center;top:1259.8px;font-size:25px;color:#22f2ff;">Save <span class="u">T</span>ags to Folder</div>
<div class="t" style="left:1535px;top:282.8px;font-size:25px;color:#88ff00;">Thumbnail</div>
<div style="left:1537px;top:316px;width:677px;height:247px;box-sizing:border-box;border:2px solid #1e1e1e;border-right-width:1.5px;border-bottom-width:1.5px"></div>
<div class="t" style="left:1535px;top:579.8px;font-size:25px;color:#88ff00;">Details</div>
<div style="left:1537px;top:615px;width:677px;height:627px;box-sizing:border-box;border:2px solid #1e1e1e;border-right-width:1.5px;border-bottom-width:1.5px"></div>
<div class="t" style="left:1554px;top:634.8px;font-size:25px;color:#88ff00;">ID:</div>
<div class="t" style="left:1673px;top:634.8px;font-size:25px;color:#72c82c;">(None selected)</div>
<div class="t" style="left:1554px;top:675.8px;font-size:25px;color:#88ff00;">Type:</div>
<div class="t" style="left:1673px;top:675.8px;font-size:25px;color:#72c82c;">(None selected)</div>
<div class="t" style="left:1554px;top:715.8px;font-size:25px;color:#88ff00;">Filename:</div>
<div class="t" style="left:1673px;top:715.8px;font-size:25px;color:#72c82c;">(None selected)</div>
<div class="t" style="left:1554px;top:756.8px;font-size:25px;color:#88ff00;">Name:</div>
<div class="t" style="left:1673px;top:756.8px;font-size:25px;color:#3a6e12;">(None selected)</div>
<div class="t" style="left:1554px;top:796.8px;font-size:25px;color:#88ff00;">Location:</div>
<div class="t" style="left:1673px;top:796.8px;font-size:25px;color:#72c82c;">(None selected)</div>
<div class="t" style="left:1554px;top:836.8px;font-size:25px;color:#88ff00;">Tags:</div>
<div style="left:1672px;top:833px;width:38px;height:37px;background:#d9d9d9;border-radius:10px"></div>
<svg style="left:1680px;top:841px;width:22px;height:22px;" viewBox="0 0 22 22"><path d="M11 3v16M3 11h16" stroke="#cfcfcf" stroke-width="1.5"/></svg>
<div style="left:1530px;top:772px;width:4px;height:4px;background:#5a5a5a"></div>
<div style="left:1530px;top:778px;width:4px;height:4px;background:#5a5a5a"></div>
<div style="left:1530px;top:784px;width:4px;height:4px;background:#5a5a5a"></div>
<div style="left:1530px;top:790px;width:4px;height:4px;background:#5a5a5a"></div>
<div style="left:1530px;top:796px;width:4px;height:4px;background:#5a5a5a"></div>
<div style="left:1530px;top:802px;width:4px;height:4px;background:#5a5a5a"></div>
<div style="left:1536px;top:1253px;width:676px;height:40px;box-sizing:border-box;border:1.5px solid #a15cf2;border-radius:4px;background:linear-gradient(#923ef0,#8536dc 50%,#772fc6)"></div>
<div class="t" style="left:874px;width:2000px;text-align:center;top:1261.8px;font-size:25px;color:#6e4cfa;"><span class="u">D</span>elete Resources</div>
<div style="left:2044px;top:1305px;width:170px;height:44px;box-sizing:border-box;border:2px solid #ff3fa0;border-radius:5px;background:linear-gradient(#9a44f0,#8a38de 50%,#7c32cb);box-shadow:inset 0 0 0 1.5px #9a58e8"></div>
<div class="t" style="left:1129px;width:2000px;text-align:center;top:1314.8px;font-size:25px;color:#22f2ff;"><span class="u">C</span>lose</div>
<div style="left:2397px;top:200px;width:274px;height:50px;box-sizing:border-box;border:1.5px solid #2e2e2e;border-bottom:none;border-radius:6px 6px 0 0"></div>
<div class="t" style="left:2420px;top:210.5px;font-size:23px;color:#88ff00;letter-spacing:-0.35px">Advanced Color Sele...</div>
<div style="left:2676px;top:203px;width:146px;height:41px;box-sizing:border-box;border:1.5px solid #2e2e2e;border-bottom:none;border-radius:6px 6px 0 0"></div>
<div class="t" style="left:2695px;top:212.5px;font-size:23px;color:#88ff00;letter-spacing:-0.4px">Tool Opti...</div>
<div style="left:2827px;top:203px;width:114px;height:41px;box-sizing:border-box;border:1.5px solid #2e2e2e;border-bottom:none;border-radius:6px 6px 0 0"></div>
<div class="t" style="left:2844px;top:212.5px;font-size:23px;color:#88ff00;letter-spacing:-0.5px">Overvi...</div>
<div style="left:2673px;top:244px;width:268px;height:1.5px;background:#e0e0e0"></div>
<svg style="left:2403px;top:250px;width:26px;height:26px;" viewBox="0 0 26 26"><circle cx="13" cy="13" r="12" fill="none" stroke="#d8d8d8" stroke-width="1.8"/><path d="M9 12.8V10.8a4.6 4.6 0 0 1 9.2 0v0.6" fill="none" stroke="#d8d8d8" stroke-width="1.8"/><rect x="6.8" y="12.6" width="12.6" height="7.4" fill="#d8d8d8"/></svg>
<div class="t" style="left:2446.4px;top:251.5px;font-size:23px;color:#88ff00;">Advanced Color Selector</div>
<svg style="left:2863px;top:251.5px;width:23px;height:23px;" viewBox="0 0 23 23"><rect x="1" y="9" width="13" height="12" fill="none" stroke="#d8d8d8" stroke-width="1.8"/><path d="M8 9V2h13v11h-7" fill="none" stroke="#d8d8d8" stroke-width="1.8"/></svg>
<svg style="left:2912px;top:253.5px;width:19px;height:19px;" viewBox="0 0 19 19"><path d="M2 2l15 15M17 2L2 17" stroke="#d8d8d8" stroke-width="2"/></svg>
<div style="left:2399px;top:290px;width:42px;height:38px;box-sizing:border-box;border:1.5px solid #a15cf2;border-radius:4px;background:linear-gradient(#923ef0,#8536dc 50%,#772fc6)"></div>
<svg style="left:2405px;top:294px;width:30px;height:30px;" viewBox="0 0 30 30"><circle cx="15" cy="15" r="11" fill="none" stroke="#c8c8c8" stroke-width="2.2"/><path d="M11.5 9.5l9 5.5-9 5.5z" fill="#c8c8c8"/></svg>
<div class="t" style="left:2453px;top:284.5px;font-size:23px;color:#88ff00;">Select a mask in "Gamut</div>
<div class="t" style="left:2453px;top:312.5px;font-size:23px;color:#88ff00;">Masks" docker</div>
<div style="left:2397px;top:282px;width:544px;height:420px;background:#88ff00"></div>
<div style="left:2397px;top:282px;width:510px;height:387px;background:#000"></div>
<div style="left:2399px;top:290px;width:42px;height:38px;box-sizing:border-box;border:1.5px solid #a15cf2;border-radius:4px;background:linear-gradient(#923ef0,#8536dc 50%,#772fc6)"></div>
<svg style="left:2405px;top:294px;width:30px;height:30px;" viewBox="0 0 30 30"><circle cx="15" cy="15" r="11" fill="none" stroke="#c8c8c8" stroke-width="2.2"/><path d="M11.5 9.5l9 5.5-9 5.5z" fill="#c8c8c8"/></svg>
<div class="t" style="left:2453px;top:284.5px;font-size:23px;color:#88ff00;">Select a mask in "Gamut</div>
<div class="t" style="left:2453px;top:312.5px;font-size:23px;color:#88ff00;">Masks" docker</div>
<svg style="left:2911px;top:286px;width:26px;height:26px;" viewBox="0 0 26 26"><circle cx="13" cy="13" r="10" fill="none" stroke="#c8c8c8" stroke-width="2.2"/><path d="M6 6l14 14" stroke="#c8c8c8" stroke-width="2.2"/></svg>
<div style="left:2399px;top:350px;width:508px;height:32px;background:linear-gradient(90deg,#000 0%,#1a1c24 15%,#3c4258 35%,#6a7a9e 60%,#98acd8 85%,#a8c4ff 100%)"></div>
<div style="left:2417px;top:350px;width:2.5px;height:32px;background:#fff"></div>
<svg style="left:2417px;top:402px;width:28px;height:28px;" viewBox="0 0 28 28"><rect x="1" y="1" width="26" height="26" fill="none" stroke="#d8d8d8" stroke-width="1.8"/><rect x="5" y="7" width="3" height="14" fill="#d8d8d8"/><path d="M11 8h12M11 14h12M11 20h12" stroke="#d8d8d8" stroke-width="2"/></svg>
<div style="left:2513px;top:384px;width:281px;height:280px;border-radius:50%;background:radial-gradient(circle,#0a0a0a 0%,rgba(10,10,10,0) 75%),conic-gradient(from 0deg,#070b02 0deg,#030b03 45deg,#020909 90deg,#03030b 135deg,#07030b 180deg,#0b0209 225deg,#110200 270deg,#0b0900 315deg,#070b02 360deg)"></div>
<svg style="left:2676px;top:543.5px;width:20px;height:20px;" viewBox="0 0 20 20"><circle cx="10" cy="10" r="8.5" fill="none" stroke="#fff" stroke-width="2"/></svg>
<svg style="left:2402px;top:673px;width:26px;height:26px;" viewBox="0 0 26 26"><path d="M20 8a9 9 0 0 0-15 3M6 18a9 9 0 0 0 15-3" fill="none" stroke="#c8c8c8" stroke-width="2.6"/><path d="M22 3v7h-7z M4 23v-7h7z" fill="#c8c8c8"/></svg>
<div style="left:2654px;top:707px;width:4px;height:4px;background:#5a5a5a"></div>
<div style="left:2660px;top:707px;width:4px;height:4px;background:#5a5a5a"></div>
<div style="left:2666px;top:707px;width:4px;height:4px;background:#5a5a5a"></div>
<div style="left:2672px;top:707px;width:4px;height:4px;background:#5a5a5a"></div>
<div style="left:2678px;top:707px;width:4px;height:4px;background:#5a5a5a"></div>
<div style="left:2684px;top:707px;width:4px;height:4px;background:#5a5a5a"></div>
<div style="left:2690px;top:707px;width:4px;height:4px;background:#5a5a5a"></div>
<div style="left:2397px;top:715px;width:105px;height:50px;box-sizing:border-box;border:1.5px solid #2e2e2e;border-bottom:none;border-radius:6px 6px 0 0"></div>
<div class="t" style="left:2416px;top:726.5px;font-size:23px;color:#88ff00;">Layers</div>
<div style="left:2506px;top:720px;width:127px;height:41px;box-sizing:border-box;border:1.5px solid #2e2e2e;border-bottom:none;border-radius:6px 6px 0 0"></div>
<div class="t" style="left:2523px;top:728.5px;font-size:23px;color:#88ff00;">Recorder</div>
<div style="left:2503px;top:760.5px;width:438px;height:1.5px;background:#e0e0e0"></div>
<svg style="left:2403px;top:766px;width:26px;height:26px;" viewBox="0 0 26 26"><circle cx="13" cy="13" r="12" fill="none" stroke="#d8d8d8" stroke-width="1.8"/><path d="M9 12.8V10.8a4.6 4.6 0 0 1 9.2 0v0.6" fill="none" stroke="#d8d8d8" stroke-width="1.8"/><rect x="6.8" y="12.6" width="12.6" height="7.4" fill="#d8d8d8"/></svg>
<div class="t" style="left:2446.4px;top:767.5px;font-size:23px;color:#88ff00;">Layers</div>
<svg style="left:2863px;top:767.5px;width:23px;height:23px;" viewBox="0 0 23 23"><rect x="1" y="9" width="13" height="12" fill="none" stroke="#d8d8d8" stroke-width="1.8"/><path d="M8 9V2h13v11h-7" fill="none" stroke="#d8d8d8" stroke-width="1.8"/></svg>
<svg style="left:2912px;top:769.5px;width:19px;height:19px;" viewBox="0 0 19 19"><path d="M2 2l15 15M17 2L2 17" stroke="#d8d8d8" stroke-width="2"/></svg>
<div style="left:2399px;top:801px;width:469px;height:62px;box-sizing:border-box;border:1.5px solid #a15cf2;border-radius:4px;background:linear-gradient(#923ef0,#8536dc 50%,#772fc6)"></div>
<div class="t" style="left:2408px;top:820.7px;font-size:24px;color:#c6c9f7;">Normal</div>
<svg style="left:2845px;top:828px;width:14px;height:8px;" viewBox="0 0 14 8"><path d="M0.5 0.5h13L7 7.5z" fill="#b59af0"/></svg>
<svg style="left:2889px;top:812px;width:36px;height:42px;" viewBox="0 0 36 42"><path d="M3 3h30v5L21 22v17l-6-5V22L3 8z" fill="none" stroke="#d8d8d8" stroke-width="2.2" stroke-linejoin="round"/></svg>
<svg style="left:2927px;top:857px;width:9px;height:4px;" viewBox="0 0 9 4"><path d="M0 0h8L4 3z" fill="#4a9a20"/></svg>
<div style="left:2399px;top:872px;width:448px;height:60px;background:#52002a;border-top:1.5px solid #5aaa20;box-sizing:border-box"></div>
<div class="t" style="left:1623px;width:2000px;text-align:center;top:891.9px;font-size:22.6px;color:#f2d400;">Opacity:&nbsp; 100%</div>
<div style="left:2848px;top:872px;width:20px;height:60px;box-sizing:border-box;border:1.5px solid #a15cf2;border-radius:4px;background:linear-gradient(#923ef0,#8536dc 50%,#772fc6)"></div>
<svg style="left:2849px;top:884px;width:18px;height:36px;" viewBox="0 0 18 36"><path d="M3 8l6-6 6 6z" fill="#5e6e4e"/><path d="M3 28l6 6 6-6z" fill="#6f9a48"/></svg>
<svg style="left:2926px;top:927px;width:9px;height:4px;" viewBox="0 0 9 4"><path d="M0 0h8L4 3z" fill="#4a9a20"/></svg>
<svg style="left:2892px;top:890px;width:30px;height:26px;" viewBox="0 0 30 26"><path d="M2 3h26M2 11h26M2 19h26" stroke="#d8d8d8" stroke-width="3.5"/></svg>
<div style="left:2391px;top:910px;width:4px;height:4px;background:#5a5a5a"></div>
<div style="left:2391px;top:916px;width:4px;height:4px;background:#5a5a5a"></div>
<div style="left:2391px;top:922px;width:4px;height:4px;background:#5a5a5a"></div>
<div style="left:2391px;top:928px;width:4px;height:4px;background:#5a5a5a"></div>
<div style="left:2391px;top:934px;width:4px;height:4px;background:#5a5a5a"></div>
<div style="left:2391px;top:940px;width:4px;height:4px;background:#5a5a5a"></div>
<div style="left:2399px;top:941px;width:540px;height:215px;background:#88ff00"></div>
<div style="left:2493px;top:941px;width:446px;height:54px;background:#52002a"></div>
<div style="left:2399px;top:995px;width:540px;height:2.5px;background:#000"></div>
<div style="left:2399px;top:1051.5px;width:540px;height:2.5px;background:#000"></div>
<div style="left:2399px;top:1108.7px;width:540px;height:3px;background:#000"></div>
<svg style="left:2407px;top:954px;width:32px;height:30px;" viewBox="0 0 32 30"><path d="M2 13.5Q15 -2 28 13.5" fill="none" stroke="#d0d0d0" stroke-width="1.6"/><path d="M3 17Q15 34 27 17" fill="none" stroke="#d0d0d0" stroke-width="1.6"/><circle cx="16" cy="11" r="7.6" fill="#d0d0d0"/></svg>
<div style="left:2454.5px;top:955.5px;width:29px;height:29px;box-sizing:border-box;border:2.2px solid #66c400;background:#9cff30;border-radius:1px"></div>
<svg style="left:2456px;top:957px;width:26px;height:26px;" viewBox="0 0 26 26"><path d="M5.5 11.5l7 10.5 9-18" fill="none" stroke="#7a10e0" stroke-width="3.8"/></svg>
<div style="left:2498px;top:946px;width:47px;height:47px;box-sizing:border-box;border:3px solid #000;border-radius:3px;background-color:#fff;background-image:linear-gradient(45deg,#d8d8d8 25%,transparent 25%,transparent 75%,#d8d8d8 75%),linear-gradient(45deg,#d8d8d8 25%,transparent 25%,transparent 75%,#d8d8d8 75%);background-size:15.4px 15.4px;background-position:0 0,7.7px 7.7px"></div>
<svg style="left:2556px;top:947px;width:26px;height:22px;" viewBox="0 0 26 22"><path d="M3 3l9 8" stroke="#d0d0d0" stroke-width="2.6" stroke-linecap="round"/><circle cx="12.5" cy="12" r="1.2" fill="#d0d0d0"/><path d="M6 1.5h17.5v15l-5.5 5H6v-5" fill="none" stroke="#d0d0d0" stroke-width="1.8"/><path d="M23.5 16.5H18v5" fill="none" stroke="#d0d0d0" stroke-width="1.4"/></svg>
<div class="t" style="left:2604px;top:957.8px;font-size:23px;color:#8212f2;">Paint Layer 2</div>
<svg style="left:2822px;top:952px;width:30px;height:32px;" viewBox="0 0 30 32"><path d="M15.5 2a10 10 0 0 1 10 12" fill="none" stroke="#8a5070" stroke-width="4"/><rect x="2.4" y="14" width="25.6" height="16.6" fill="#8a5070"/></svg>
<svg style="left:2860px;top:955px;width:32px;height:26px;" viewBox="0 0 32 26"><path d="M27 4c-3 6-6 12-6 15 0 3 2 4 5 3M21 12c-2-6-6-9-10-9-5 0-9 5-9 11 0 5 3 8 7 8 5 0 9-6 12-11" fill="none" stroke="#8a5070" stroke-width="3.6" stroke-linecap="round"/></svg>
<svg style="left:2901px;top:953px;width:32px;height:32px;" viewBox="0 0 32 32"><rect width="32" height="32" fill="#8a5070"/><rect width="10.7" height="10.7" fill="#6a2a4a"/><rect x="21.3" width="10.7" height="10.7" fill="#6a2a4a"/><rect x="10.7" y="10.7" width="10.6" height="10.6" fill="#6a2a4a"/><rect y="21.3" width="10.7" height="10.7" fill="#6a2a4a"/><rect x="21.3" y="21.3" width="10.7" height="10.7" fill="#6a2a4a"/></svg>
<svg style="left:2407px;top:1010.5px;width:32px;height:30px;" viewBox="0 0 32 30"><path d="M2 13.5Q15 -2 28 13.5" fill="none" stroke="#d0d0d0" stroke-width="1.6"/><path d="M3 17Q15 34 27 17" fill="none" stroke="#d0d0d0" stroke-width="1.6"/><circle cx="16" cy="11" r="7.6" fill="#d0d0d0"/></svg>
<div style="left:2454.5px;top:1012.0px;width:29px;height:29px;box-sizing:border-box;border:2.2px solid #66c400;background:#9cff30;border-radius:1px"></div>
<div style="left:2498px;top:1002.5px;width:47px;height:47px;box-sizing:border-box;border:3px solid #000;border-radius:3px;background-color:#fff;background-image:linear-gradient(45deg,#d8d8d8 25%,transparent 25%,transparent 75%,#d8d8d8 75%),linear-gradient(45deg,#d8d8d8 25%,transparent 25%,transparent 75%,#d8d8d8 75%);background-size:15.4px 15.4px;background-position:0 0,7.7px 7.7px"></div>
<svg style="left:2556px;top:1003.5px;width:26px;height:22px;" viewBox="0 0 26 22"><path d="M3 3l9 8" stroke="#d8f0c8" stroke-width="2.6" stroke-linecap="round"/><circle cx="12.5" cy="12" r="1.2" fill="#d8f0c8"/><path d="M6 1.5h17.5v15l-5.5 5H6v-5" fill="none" stroke="#d8f0c8" stroke-width="1.8"/><path d="M23.5 16.5H18v5" fill="none" stroke="#d8f0c8" stroke-width="1.4"/></svg>
<div class="t" style="left:2604px;top:1014.3px;font-size:23px;color:#8212f2;">Paint Layer 1</div>
<svg style="left:2822px;top:1008.5px;width:30px;height:32px;" viewBox="0 0 30 32"><path d="M15.5 2a10 10 0 0 1 10 12" fill="none" stroke="#a4f050" stroke-width="4"/><rect x="2.4" y="14" width="25.6" height="16.6" fill="#a4f050"/></svg>
<svg style="left:2860px;top:1011.5px;width:32px;height:26px;" viewBox="0 0 32 26"><path d="M27 4c-3 6-6 12-6 15 0 3 2 4 5 3M21 12c-2-6-6-9-10-9-5 0-9 5-9 11 0 5 3 8 7 8 5 0 9-6 12-11" fill="none" stroke="#a4f050" stroke-width="3.6" stroke-linecap="round"/></svg>
<svg style="left:2901px;top:1009.5px;width:32px;height:32px;" viewBox="0 0 32 32"><rect width="32" height="32" fill="#a8f858"/><rect width="10.7" height="10.7" fill="#80d830"/><rect x="21.3" width="10.7" height="10.7" fill="#80d830"/><rect x="10.7" y="10.7" width="10.6" height="10.6" fill="#80d830"/><rect y="21.3" width="10.7" height="10.7" fill="#80d830"/><rect x="21.3" y="21.3" width="10.7" height="10.7" fill="#80d830"/></svg>
<svg style="left:2407px;top:1067px;width:32px;height:30px;" viewBox="0 0 32 30"><path d="M2 13.5Q15 -2 28 13.5" fill="none" stroke="#d0d0d0" stroke-width="1.6"/><path d="M3 17Q15 34 27 17" fill="none" stroke="#d0d0d0" stroke-width="1.6"/><circle cx="16" cy="11" r="7.6" fill="#d0d0d0"/></svg>
<div style="left:2454.5px;top:1068.5px;width:29px;height:29px;box-sizing:border-box;border:2.2px solid #66c400;background:#9cff30;border-radius:1px"></div>
<div style="left:2500px;top:1058px;width:39px;height:45px;box-sizing:border-box;border:3px solid #000;border-radius:3px;background:#d8d8d8"></div>
<svg style="left:2556px;top:1060px;width:26px;height:22px;" viewBox="0 0 26 22"><path d="M3 3l9 8" stroke="#d8f0c8" stroke-width="2.6" stroke-linecap="round"/><circle cx="12.5" cy="12" r="1.2" fill="#d8f0c8"/><path d="M6 1.5h17.5v15l-5.5 5H6v-5" fill="none" stroke="#d8f0c8" stroke-width="1.8"/><path d="M23.5 16.5H18v5" fill="none" stroke="#d8f0c8" stroke-width="1.4"/></svg>
<div class="t" style="left:2604px;top:1070.8px;font-size:23px;color:#8212f2;">Background</div>
<svg style="left:2822px;top:1066px;width:30px;height:33px;" viewBox="0 0 30 33"><path d="M7 16v-5a8 8 0 0 1 16 0v5" fill="none" stroke="#d0d0d0" stroke-width="4"/><rect x="2.4" y="15.4" width="25.6" height="16" fill="#d0d0d0"/></svg>
<svg style="left:2860px;top:1068px;width:32px;height:26px;" viewBox="0 0 32 26"><path d="M27 4c-3 6-6 12-6 15 0 3 2 4 5 3M21 12c-2-6-6-9-10-9-5 0-9 5-9 11 0 5 3 8 7 8 5 0 9-6 12-11" fill="none" stroke="#a4f050" stroke-width="3.6" stroke-linecap="round"/></svg>
<svg style="left:2901px;top:1066px;width:32px;height:32px;" viewBox="0 0 32 32"><rect width="32" height="32" fill="#a8f858"/><rect width="10.7" height="10.7" fill="#80d830"/><rect x="21.3" width="10.7" height="10.7" fill="#80d830"/><rect x="10.7" y="10.7" width="10.6" height="10.6" fill="#80d830"/><rect y="21.3" width="10.7" height="10.7" fill="#80d830"/><rect x="21.3" y="21.3" width="10.7" height="10.7" fill="#80d830"/></svg>
<svg style="left:2405px;top:1167px;width:48px;height:48px;" viewBox="0 0 48 48"><path d="M24 4v40M4 24h40" stroke="#d4d4d4" stroke-width="3.6"/></svg>
<svg style="left:2463px;top:1188px;width:14px;height:8px;" viewBox="0 0 14 8"><path d="M0.5 0.5h13L7 7.5z" fill="#4a9a20"/></svg>
<svg style="left:2493px;top:1168px;width:46px;height:46px;" viewBox="0 0 46 46"><rect x="11" y="3" width="32" height="32" fill="none" stroke="#d4d4d4" stroke-width="4"/><path d="M4 11v33h33" fill="none" stroke="#d4d4d4" stroke-width="3.8"/></svg>
<svg style="left:2560px;top:1175px;width:46px;height:28px;" viewBox="0 0 46 28"><path d="M3 3.5l20.5 20.5L44 3.5" fill="none" stroke="#d4d4d4" stroke-width="4.8"/></svg>
<svg style="left:2629px;top:1175px;width:46px;height:28px;" viewBox="0 0 46 28"><path d="M3 25.5L23.5 5 44 25.5" fill="none" stroke="#c4c4c4" stroke-width="4.8"/></svg>
<svg style="left:2697px;top:1170px;width:48px;height:44px;" viewBox="0 0 48 44"><path d="M2 7.5h42M2 21.5h42M2 35.5h42" stroke="#d4d4d4" stroke-width="4"/><circle cx="33" cy="7.5" r="4.5" fill="#d4d4d4"/><circle cx="12" cy="21.5" r="4.5" fill="#d4d4d4"/><circle cx="23" cy="35.5" r="4.5" fill="#d4d4d4"/></svg>
<svg style="left:2755px;top:1188px;width:14px;height:8px;" viewBox="0 0 14 8"><path d="M0.5 0.5h13L7 7.5z" fill="#4a9a20"/></svg>
<svg style="left:2887px;top:1168px;width:44px;height:46px;" viewBox="0 0 44 46"><path d="M2 10.5h40" stroke="#d4d4d4" stroke-width="3.5"/><path d="M13 9a9 5 0 0 1 18 0" fill="none" stroke="#d4d4d4" stroke-width="3"/><path d="M7 15h30v25a5 5 0 0 1-5 5H12a5 5 0 0 1-5-5z" fill="#d4d4d4"/></svg>
<div style="left:2654px;top:1225px;width:4px;height:4px;background:#5a5a5a"></div>
<div style="left:2660px;top:1225px;width:4px;height:4px;background:#5a5a5a"></div>
<div style="left:2666px;top:1225px;width:4px;height:4px;background:#5a5a5a"></div>
<div style="left:2672px;top:1225px;width:4px;height:4px;background:#5a5a5a"></div>
<div style="left:2678px;top:1225px;width:4px;height:4px;background:#5a5a5a"></div>
<div style="left:2684px;top:1225px;width:4px;height:4px;background:#5a5a5a"></div>
<div style="left:2690px;top:1225px;width:4px;height:4px;background:#5a5a5a"></div>
<svg style="left:2403px;top:1236px;width:26px;height:26px;" viewBox="0 0 26 26"><circle cx="13" cy="13" r="12" fill="none" stroke="#d8d8d8" stroke-width="1.8"/><path d="M9 12.8V10.8a4.6 4.6 0 0 1 9.2 0v0.6" fill="none" stroke="#d8d8d8" stroke-width="1.8"/><rect x="6.8" y="12.6" width="12.6" height="7.4" fill="#d8d8d8"/></svg>
<div class="t" style="left:2446.4px;top:1237.5px;font-size:23px;color:#88ff00;">Brush Presets</div>
<svg style="left:2863px;top:1237.5px;width:23px;height:23px;" viewBox="0 0 23 23"><rect x="1" y="9" width="13" height="12" fill="none" stroke="#d8d8d8" stroke-width="1.8"/><path d="M8 9V2h13v11h-7" fill="none" stroke="#d8d8d8" stroke-width="1.8"/></svg>
<svg style="left:2912px;top:1239.5px;width:19px;height:19px;" viewBox="0 0 19 19"><path d="M2 2l15 15M17 2L2 17" stroke="#d8d8d8" stroke-width="2"/></svg>
<div style="left:2399px;top:1270px;width:350px;height:44px;box-sizing:border-box;border:1.5px solid #a15cf2;border-radius:4px;background:linear-gradient(#923ef0,#8536dc 50%,#772fc6)"></div>
<div class="t" style="left:2408px;top:1281.6px;font-size:23.5px;color:#c6c9f7;">Best Brushes</div>
<svg style="left:2726px;top:1290px;width:14px;height:8px;" viewBox="0 0 14 8"><path d="M0.5 0.5h13L7 7.5z" fill="#b59af0"/></svg>
<div style="left:2754px;top:1272px;width:99px;height:40px;box-sizing:border-box;border:1.5px solid #a15cf2;border-radius:4px;background:linear-gradient(#923ef0,#8536dc 50%,#772fc6)"></div>
<svg style="left:2762px;top:1278px;width:18px;height:28px;" viewBox="0 0 18 28"><path d="M2 2h13v23l-6.5-6L2 25z" fill="none" stroke="#d8d8d8" stroke-width="2.4"/></svg>
<div class="t" style="left:2789px;top:1281.6px;font-size:23.5px;color:#c6c9f7;">Tag</div>
<svg style="left:2846px;top:1305px;width:6px;height:4px;" viewBox="0 0 6 4"><path d="M0 0h6L3 3z" fill="#4a9a20"/></svg>
<svg style="left:2866px;top:1282px;width:24px;height:18px;" viewBox="0 0 24 18"><path d="M1 2h22M1 9h22M1 16h22" stroke="#d8d8d8" stroke-width="3"/></svg>
<svg style="left:2906px;top:1276px;width:28px;height:29px;" viewBox="0 0 28 29"><rect x="1" y="1" width="26" height="27" fill="none" stroke="#d8d8d8" stroke-width="2"/><path d="M13 3v12" stroke="#d8d8d8" stroke-width="1.5" stroke-dasharray="2 2"/></svg>
<div style="left:2399px;top:1319px;width:519px;height:278px;background:#88ff00"></div>
<div style="left:2401px;top:1321px;width:123px;height:123px;background:#d0d0d0"></div>
<svg style="left:2401px;top:1321px;width:123px;height:123px;" viewBox="0 0 123 123"><defs><linearGradient id="pb" x1="0" y1="1" x2="1" y2="0"><stop offset="0" stop-color="#2a2e36"/><stop offset=".5" stop-color="#4a5058"/><stop offset="1" stop-color="#23272e"/></linearGradient></defs><path d="M71 42L111 3h12v22L91 59z" fill="url(#pb)"/><path d="M71 43L86 58.5 57 70z" fill="#e8dcc0"/><path d="M71 43l6 6-20 21z" fill="#f4ecd8"/><path d="M49.4 77.4L57 67 63 73z" fill="#1a1e2a"/><path d="M79 34l15 15" stroke="#b01818" stroke-width="4"/><path d="M43.5 85C34 98 36 112 52 110S84 90 88 93 80 113 92 113 112 101 123 100" fill="none" stroke="#2a2a2a" stroke-width="1.6"/></svg>
<div style="left:2527px;top:1319px;width:127px;height:127px;background:#ff0080"></div>
<div style="left:2535px;top:1327px;width:111px;height:111px;background:#ff00ff"></div>
<svg style="left:2535px;top:1327px;width:111px;height:111px;" viewBox="0 0 111 111"><path d="M13.4 17.7L66 10.3 103 34.9 93 88.6 39.4 100.4 2.7 72.5 11.3 36z" fill="#ff0044"/><path d="M13.4 17.7L66 10.3 58 40 20 45z" fill="#ff1060"/><path d="M66 10.3L103 34.9 96 56 58 40z" fill="#ff0030"/><path d="M2.7 72.5L20 45 58 40 70 70 39.4 100.4z" fill="#ff0010"/><path d="M58 40L96 56 93 88.6 70 70z" fill="#ff0068"/><path d="M30 25L50 14M20 45l40-32M16 60l18 10M80 80l10 10" stroke="#ff40c0" stroke-width="2" opacity=".8"/></svg>
<div style="left:2656px;top:1321px;width:123px;height:123px;background:#fff"></div>
<svg style="left:2656px;top:1321px;width:123px;height:123px;" viewBox="0 0 123 123"><path d="M37 8L48.3 4.3 67.7 23 90.2 95.6 86 123 75 123 55.9 105 32.8 34.4z" fill="#0a6a80"/><path d="M37 8L48.3 4.3 58 30 50 34 32.8 34.4z" fill="#2aa0e0"/><path d="M48.3 4.3L67.7 23 62 34 58 30z" fill="#2030d0"/><path d="M32.8 34.4L50 34 55.9 105z" fill="#28d8e8"/><path d="M50 34L62 34 90.2 95.6 72 90 55.9 105z" fill="#1898a8"/><path d="M62 34L67.7 23 90.2 95.6z" fill="#0a3a44"/><path d="M55.9 105L72 90 86 123 75 123z" fill="#0a4a30"/><path d="M40 60L55 100" stroke="#40f8ff" stroke-width="3" opacity=".8"/></svg>
<div style="left:2784px;top:1321px;width:123px;height:123px;background:#d0d0d0"></div>
<svg style="left:2784px;top:1321px;width:123px;height:123px;" viewBox="0 0 123 123"><path d="M59 45L106 0h17v13L68.5 62.3z" fill="#3a3c48"/><path d="M63 44l46-44h6L66 50z" fill="#8a8c98" opacity=".8"/><path d="M80 34l30-34" stroke="#b0b0c0" stroke-width="1.5"/><path d="M59 45L68.5 62.3 52 70z" fill="#30303a"/><path d="M44 77.3L53 66 57 72z" fill="#555"/><path d="M36 90c-6 8 2 16 12 10s14-10 16-6-6 12 0 10 8-14 10-20 2 16 8 12 6-10 10-8 4 8 8 4 10-6 23-10" fill="none" stroke="#222" stroke-width="1.5"/></svg>
<div style="left:2401px;top:1448px;width:123px;height:123px;background:#d0d0d0"></div>
<svg style="left:2401px;top:1448px;width:123px;height:123px;" viewBox="0 0 123 123"><path d="M66.6 40.8L101 0h22v19.3L88 55.9z" fill="#9a9a9a"/><path d="M70 38L104 0h8L76 44z" fill="#e0e0e0" opacity=".7"/><path d="M84 22l14 14-10 10-14-14z" fill="#222"/><path d="M80 28l12 12M96 12l12 12" stroke="#3a80c0" stroke-width="5"/><path d="M66.6 40.8L88 55.9 70 62 60 52z" fill="#888"/><path d="M46.2 76.3L60 58 66 64z" fill="#666"/><path d="M38.7 83.8C32 92 34 104 52 105S100 100 123 92" fill="none" stroke="#000" stroke-width="4.5" stroke-linecap="round"/></svg>
<div style="left:2529px;top:1448px;width:123px;height:123px;background:#d0d0d0"></div>
<svg style="left:2529px;top:1448px;width:123px;height:123px;" viewBox="0 0 123 123"><path d="M73 33L103 0h20v12L84 40.6z" fill="#f0c030"/><path d="M76 31l30-31h6L80 35z" fill="#fff0a0" opacity=".6"/><path d="M44 77.3L73 33 84 40.6z" fill="#b8b8b8"/><path d="M44 77.3L73 33 76 36z" fill="#e8e8e8"/><path d="M70 38l6 6" stroke="#444" stroke-width="2.5"/><path d="M39.7 86L30 98.3c14-2 28-10 42-14L52.6 108c8 0 14-2 20-2 20-4 34-16 50-26" fill="none" stroke="#1a1a1a" stroke-width="2.6"/></svg>
<div style="left:2656px;top:1448px;width:123px;height:123px;background:radial-gradient(circle at 33% 42%,#e8e8e8,#d0d0d0 60%,#c4c4c4)"></div>
<svg style="left:2656px;top:1448px;width:123px;height:123px;" viewBox="0 0 123 123"><path d="M74 32L104 0h19v19.3L90 46z" fill="#141414"/><path d="M80 30L108 0h6L84 34z" fill="#555" opacity=".7"/><path d="M38.7 85.4L54.8 56 79.5 33.3 86 40.8 79.5 62.3z" fill="#b8b8b8"/><path d="M38.7 85.4L54.8 56 70 44z" fill="#e8e8e8"/><circle cx="64" cy="56" r="3" fill="#222"/><path d="M34.4 94.5L32.2 106.4 73 90.2 75.2 105 122.7 86" fill="none" stroke="#111" stroke-width="4.5" stroke-linejoin="round"/></svg>
<div style="left:2784px;top:1448px;width:123px;height:123px;background:#d0d0d0"></div>
<svg style="left:2784px;top:1448px;width:123px;height:123px;" viewBox="0 0 123 123"><path d="M92 26L110 2h13v12L103 36z" fill="#d05a20"/><path d="M95 22l16-20h5L99 26z" fill="#f09060" opacity=".7"/><path d="M74 42L92 26 103 36 86 50z" fill="#c8c8c8"/><path d="M76 40l18-16" stroke="#fff" stroke-width="2" opacity=".7"/><path d="M48.3 71L66 48 74 42 86 50 80 58z" fill="#8a6040"/><path d="M48.3 71L58 58 62 62z" fill="#111"/><path d="M45.6 77.3C40 88 42 100 56 106S100 104 123 96" fill="none" stroke="#000" stroke-width="9" stroke-linecap="round"/><path d="M60 108C80 112 104 106 123 100" fill="none" stroke="#000" stroke-width="8"/></svg>
<div style="left:2401px;top:1576px;width:123px;height:21px;background:#d0d0d0"></div>
<div style="left:2529px;top:1576px;width:123px;height:21px;background:#d0d0d0"></div>
<div style="left:2656px;top:1576px;width:123px;height:21px;background:#d0d0d0"></div>
<div style="left:2784px;top:1576px;width:123px;height:21px;background:#d0d0d0"></div>
<svg style="left:2401px;top:1576px;width:123px;height:21px;" viewBox="0 0 123 21"><path d="M72 21L92 0h31v21z" fill="#6a98c8"/><path d="M100 4l8 10" stroke="#4a6888" stroke-width="4"/><circle cx="34" cy="21" r="4" fill="#555"/></svg>
<svg style="left:2529px;top:1576px;width:123px;height:21px;" viewBox="0 0 123 21"><path d="M100 21L118 0h5v21z" fill="#555"/><path d="M110 12l6-4" stroke="#d08030" stroke-width="2"/></svg>
<svg style="left:2656px;top:1576px;width:123px;height:21px;" viewBox="0 0 123 21"><path d="M80 21L100 0h23v21z" fill="#1a1a1a"/><path d="M82 21l12-12 6 6-6 6z" fill="#f0f0f0"/></svg>
<svg style="left:2784px;top:1576px;width:123px;height:21px;" viewBox="0 0 123 21"><path d="M72 21L98 0h25v21z" fill="#eae6f0"/><path d="M112 21l11-11v11z" fill="#c0a8e8"/><path d="M100 0l-20 21" stroke="#777" stroke-width="1.5"/></svg>
<div style="left:2919px;top:1319px;width:20px;height:278px;background:#7430c2"></div>
<div style="left:2919px;top:1319px;width:20px;height:20px;background:#8a46d8;box-sizing:border-box;border:1px solid #9a5ae6"></div>
<svg style="left:2920px;top:1321px;width:18px;height:16px;" viewBox="0 0 18 16"><path d="M2 12L9 4l7 8z" fill="#6f9a48"/></svg>
<div style="left:2919px;top:1338px;width:20px;height:2px;background:#1a0a2a"></div>
<div style="left:2920px;top:1342px;width:18px;height:43px;background:#8538da;box-sizing:border-box;border:1px solid #9a5ae6"></div>
<div style="left:2919px;top:1577px;width:20px;height:20px;background:#8a46d8;box-sizing:border-box;border:1px solid #9a5ae6"></div>
<svg style="left:2920px;top:1579px;width:18px;height:16px;" viewBox="0 0 18 16"><path d="M2 4l7 8 7-8z" fill="#6f9a48"/></svg>
<div style="left:2399px;top:1601px;width:370px;height:42px;background:#88ff00;border-radius:4px"></div>
<div class="t" style="left:2404px;top:1610.7px;font-size:23.5px;color:#8a8a8a;">Search</div>
<div style="left:2781px;top:1614px;width:18px;height:17px;background:#88ff00"></div>
<div class="t" style="left:2808.5px;top:1610.7px;font-size:23.5px;color:#88ff00;">Filter in Tag</div>
<svg style="left:14px;top:1662px;width:34px;height:34px;" viewBox="0 0 34 34"><rect x="1.5" y="1.5" width="31" height="31" fill="none" stroke="#c8c8c8" stroke-width="2.4"/><circle cx="17" cy="17" r="9.5" fill="none" stroke="#d8d8d8" stroke-width="2" stroke-dasharray="2 2.7"/></svg>
<svg style="left:79px;top:1669px;width:22px;height:22px;" viewBox="0 0 22 22"><path d="M1 4l3-3M21 4l-3-3M1 18l3 3M21 18l-3 3" stroke="#d8d8d8" stroke-width="1.6"/><rect x="5" y="5" width="12" height="12" fill="none" stroke="#d8d8d8" stroke-width="1.8"/><rect x="5" y="5" width="12" height="3" fill="#d8d8d8"/></svg>
<div class="t" style="left:135px;top:1669.8px;font-size:25px;color:#88ff00;">Crystal 08</div>
<div class="t" style="left:638px;top:1669.8px;font-size:25px;color:#88ff00;letter-spacing:0.15px">RGB/Alpha (8-bit integer/channel)&nbsp; sRGB-elle-V2-srgbtrc.icc</div>
<div class="t" style="left:1995px;top:1669.8px;font-size:25px;color:#c6c9f7;">1,000 <span class="u" style="text-decoration-thickness:1.5px">x</span> 1,200 (4.8 MiB)</div>
<svg style="left:2274px;top:1659px;width:45px;height:45px;" viewBox="0 0 45 45"><circle cx="22.5" cy="22.5" r="20.5" fill="#8c8c8c" stroke="#e0e0e0" stroke-width="2.4"/><path d="M22.5 3v39M3 22.5h39" stroke="#e8e8e8" stroke-width="1.8" stroke-dasharray="3 2.5"/><path d="M22.5 22.5h20" stroke="#fff" stroke-width="2"/><circle cx="22.5" cy="22.5" r="2" fill="#fff"/></svg>
<div class="t" style="left:2336px;top:1669.8px;font-size:25px;color:#6a7a5c;">0.00<span style="font-size:16px;vertical-align:10px">&deg;</span></div>
<div class="t" style="left:2604px;top:1669.8px;font-size:25px;color:#88ff00;">114.9%</div>
<div style="left:2725px;top:1680px;width:50px;height:2.5px;background:#6a2448"></div>
<div style="left:2790px;top:1680px;width:104px;height:2.5px;background:#7c34d6"></div>
<div style="left:2775px;top:1674px;width:16px;height:15px;background:linear-gradient(#a050f8,#8038e0);border-radius:3px"></div>
<svg style="left:2906px;top:1671px;width:28px;height:23px;" viewBox="0 0 28 23"><rect x="1.2" y="1.2" width="25.6" height="16" fill="none" stroke="#d8d8d8" stroke-width="2"/><rect x="12.5" y="7" width="3" height="3" fill="#d8d8d8"/><path d="M14 18v3M7 21.5h14" stroke="#d8d8d8" stroke-width="1.8"/></svg>
<div style="left:0px;top:1712px;width:2944px;height:128px;background:#46444f"></div>
<div style="left:1020px;top:1738px;width:76px;height:76px;box-sizing:border-box;border:2px solid #5e5c68;border-radius:17px"></div>
<svg style="left:1028.5px;top:1746.5px;width:13px;height:13px;" viewBox="0 0 13 13"><circle cx="6.5" cy="6.5" r="6.5" fill="#fff"/><path d="M4 9l2.5-5 2.5 5z" fill="#e94235"/></svg>
<svg style="left:1043.5px;top:1746.5px;width:13px;height:13px;" viewBox="0 0 13 13"><circle cx="6.5" cy="6.5" r="6.5" fill="#fff"/><path d="M4 9l2.5-5 2.5 5z" fill="#34a853"/></svg>
<svg style="left:1059.0px;top:1746.5px;width:13px;height:13px;" viewBox="0 0 13 13"><circle cx="6.5" cy="6.5" r="6.5" fill="#fff"/><path d="M4 9l2.5-5 2.5 5z" fill="#4285f4"/></svg>
<svg style="left:1074.0px;top:1746.5px;width:13px;height:13px;" viewBox="0 0 13 13"><circle cx="6.5" cy="6.5" r="6.5" fill="#fff"/><path d="M4 9l2.5-5 2.5 5z" fill="#ea4335"/></svg>
<svg style="left:1028.5px;top:1761.5px;width:13px;height:13px;" viewBox="0 0 13 13"><circle cx="6.5" cy="6.5" r="6.5" fill="#fff"/><path d="M4 9l2.5-5 2.5 5z" fill="#00a0f0"/></svg>
<svg style="left:1093.5px;top:1730.5px;width:11px;height:11px;" viewBox="0 0 11 11"><circle cx="5.5" cy="5.5" r="5.5" fill="#8c6aa2"/></svg>
<svg style="left:1196.5px;top:1729.1px;width:11px;height:11px;" viewBox="0 0 11 11"><circle cx="5.5" cy="5.5" r="5.5" fill="#8c6aa2"/></svg>
<svg style="left:1297.1px;top:1729.1px;width:11px;height:11px;" viewBox="0 0 11 11"><circle cx="5.5" cy="5.5" r="5.5" fill="#8c6aa2"/></svg>
<svg style="left:1721.5px;top:1729.1px;width:11px;height:11px;" viewBox="0 0 11 11"><circle cx="5.5" cy="5.5" r="5.5" fill="#8c6aa2"/></svg>
<svg style="left:1117px;top:1734px;width:83px;height:83px;" viewBox="0 0 83 83"><defs><radialGradient id="eg" cx="30%" cy="25%" r="75%"><stop offset="0" stop-color="#199a22"/><stop offset="1" stop-color="#007c0a"/></radialGradient></defs><circle cx="42" cy="41.5" r="41.2" fill="url(#eg)"/><g fill="#ecece6"><circle cx="41.3" cy="27" r="16"/><circle cx="24.5" cy="46.5" r="10.8"/><circle cx="58" cy="45.5" r="10.8"/><rect x="25" y="32" width="33" height="30" rx="12"/><path d="M36.3 60h10l1.4 12.5H35z"/></g><path d="M32 23.8h18.6v6.2H38.6v6h10v6.4h-10v6.2h12v6.1H32z" fill="#008a12"/></svg>
<svg style="left:1218px;top:1734px;width:83px;height:83px;" viewBox="0 0 83 83"><circle cx="41.5" cy="41.5" r="41.5" fill="#00c853"/><g transform="translate(41.5 41.5) scale(1.24 1.16) translate(-41.5 -41)"><path d="M20 28c6-5 13-6 13-6l2 3h13l2-3s7 1 13 6c4 8 5 17 4 26-5 4-10 6-10 6l-3-4c2-.7 3.5-1.5 5-2.5l-1-1c-9 4-19 4-28 0l-1 1c1.5 1 3 1.8 5 2.5l-3 4s-5-2-10-6c-1-9 0-18 4-26z" fill="#fff"/><ellipse cx="33" cy="42" rx="4.5" ry="5" fill="#00c853"/><ellipse cx="50" cy="42" rx="4.5" ry="5" fill="#00c853"/></g></svg>
<svg style="left:1319px;top:1734px;width:83px;height:83px;" viewBox="0 0 83 83"><defs><linearGradient id="pg" x1="0" y1="0" x2="1" y2="1"><stop offset="0" stop-color="#283090"/><stop offset="1" stop-color="#1e2470"/></linearGradient></defs><circle cx="41.5" cy="41.5" r="41" fill="url(#pg)"/><circle cx="41.5" cy="41.8" r="24.5" fill="none" stroke="#ffa010" stroke-width="8" stroke-dasharray="51.7 12 65 12 13.2"/><path d="M47 20L66.8 12.6 56 24z" fill="#ffa010"/><path d="M36 63L17.2 70.9 27 59z" fill="#ffa010"/><path d="M34.6 51L52 41 60 49 48 60z" fill="#1a1e60" opacity=".75"/><path d="M34.6 32.4L52 41 34.6 51z" fill="#fff"/></svg>
<div style="left:1420px;top:1734px;width:84px;height:84px;border-radius:50%;background:conic-gradient(from 0deg,#ff40d0,#ff7aa0 60deg,#ffd060 110deg,#f0ff20 140deg,#40ffa0 200deg,#00f0ff 230deg,#40a0ff 270deg,#c060ff 310deg,#ff40f0 360deg)"></div>
<svg style="left:1420px;top:1734px;width:84px;height:84px;" viewBox="0 0 84 84"><defs><radialGradient id="kr" cx="45%" cy="45%" r="55%"><stop offset=".35" stop-color="#fff" stop-opacity=".35"/><stop offset="1" stop-color="#fff" stop-opacity="0"/></radialGradient></defs><circle cx="42" cy="42" r="42" fill="url(#kr)"/><path d="M8 14l10-8 40 44-8 6z" fill="#444"/><path d="M50 52l8-6 8 8-6 6z" fill="#b0b0b0"/><path d="M58 56c6-2 12 2 11 10-1 6-4 10-8 14-2-6-6-12-3-24z" fill="#2a2a2a"/></svg>
<div style="left:1521px;top:1754px;width:2px;height:43px;background:#b0b0b0"></div>
<svg style="left:1543px;top:1734px;width:83px;height:83px;" viewBox="0 0 83 83"><circle cx="41.5" cy="41.5" r="41.5" fill="#126e22"/><path d="M14 26a4 4 0 0 1 4-4h11l6 5h22a4 4 0 0 1 4 4v3H31c-6 0-9 3-10.5 8L14 58z" fill="#fff"/><path d="M20.5 43c1.5-6 4.5-9 10-9h33a3 3 0 0 1 3 3.8L60.5 58a4.5 4.5 0 0 1-4.3 3.3H18a4 4 0 0 1-4-4z" fill="#fff"/><path d="M15 59L20.5 43c1.5-6 4.5-9.5 10-9.5H67" fill="none" stroke="#126e22" stroke-width="3.2"/></svg>
<svg style="left:1644px;top:1734px;width:83px;height:83px;" viewBox="0 0 83 83"><defs><linearGradient id="vg" x1="0" y1="0" x2="0" y2="1"><stop offset="0" stop-color="#e040a0"/><stop offset="1" stop-color="#6050e0"/></linearGradient></defs><circle cx="41.5" cy="41.5" r="41.5" fill="#1c1c1a"/><path d="M28 28.3L41 54.6 54 28.3" fill="none" stroke="#fff" stroke-width="3.2"/><path d="M32.6 27.4h16.1L40.7 41.8z" fill="url(#vg)"/></svg>
<svg style="left:1745px;top:1734px;width:83px;height:83px;" viewBox="0 0 83 83"><circle cx="41.5" cy="41.5" r="41.5" fill="#1b1c1e"/><text x="42" y="53.7" font-size="43" text-anchor="middle" fill="#f4f4f4" font-family="Liberation Sans" font-weight="bold" letter-spacing="-0.8">c.ai</text></svg>
<div style="left:1847px;top:1736px;width:80px;height:80px;background:#2c2b33;border-radius:20px"></div>
<div style="left:1859px;top:1748px;width:24.5px;height:24px;background:#3b7bff;border-radius:8px"></div>
<div style="left:1890px;top:1748px;width:24.5px;height:24px;background:#0aa0b8;border-radius:8px"></div>
<div style="left:1859px;top:1779px;width:24.5px;height:24px;background:#ffa238;border-radius:8px"></div>
<div style="left:1890px;top:1779px;width:24.5px;height:24px;background:#f25a62;border-radius:8px"></div>
<svg style="left:2503px;top:1762px;width:29px;height:28px;" viewBox="0 0 29 28"><path d="M3 3.5h23M3 14h23M3 24.5h23" stroke="#fff" stroke-width="3.4" stroke-linecap="round"/></svg>
<svg style="left:2613px;top:1761px;width:31px;height:31px;" viewBox="0 0 31 31"><circle cx="15.5" cy="15.5" r="13.3" fill="none" stroke="#fff" stroke-width="3.4"/></svg>
<svg style="left:2724px;top:1757px;width:26px;height:37px;" viewBox="0 0 26 37"><path d="M20 3L5 18.5 20 34" fill="none" stroke="#fff" stroke-width="3.4" stroke-linecap="round" stroke-linejoin="round"/></svg>
</body></html>
